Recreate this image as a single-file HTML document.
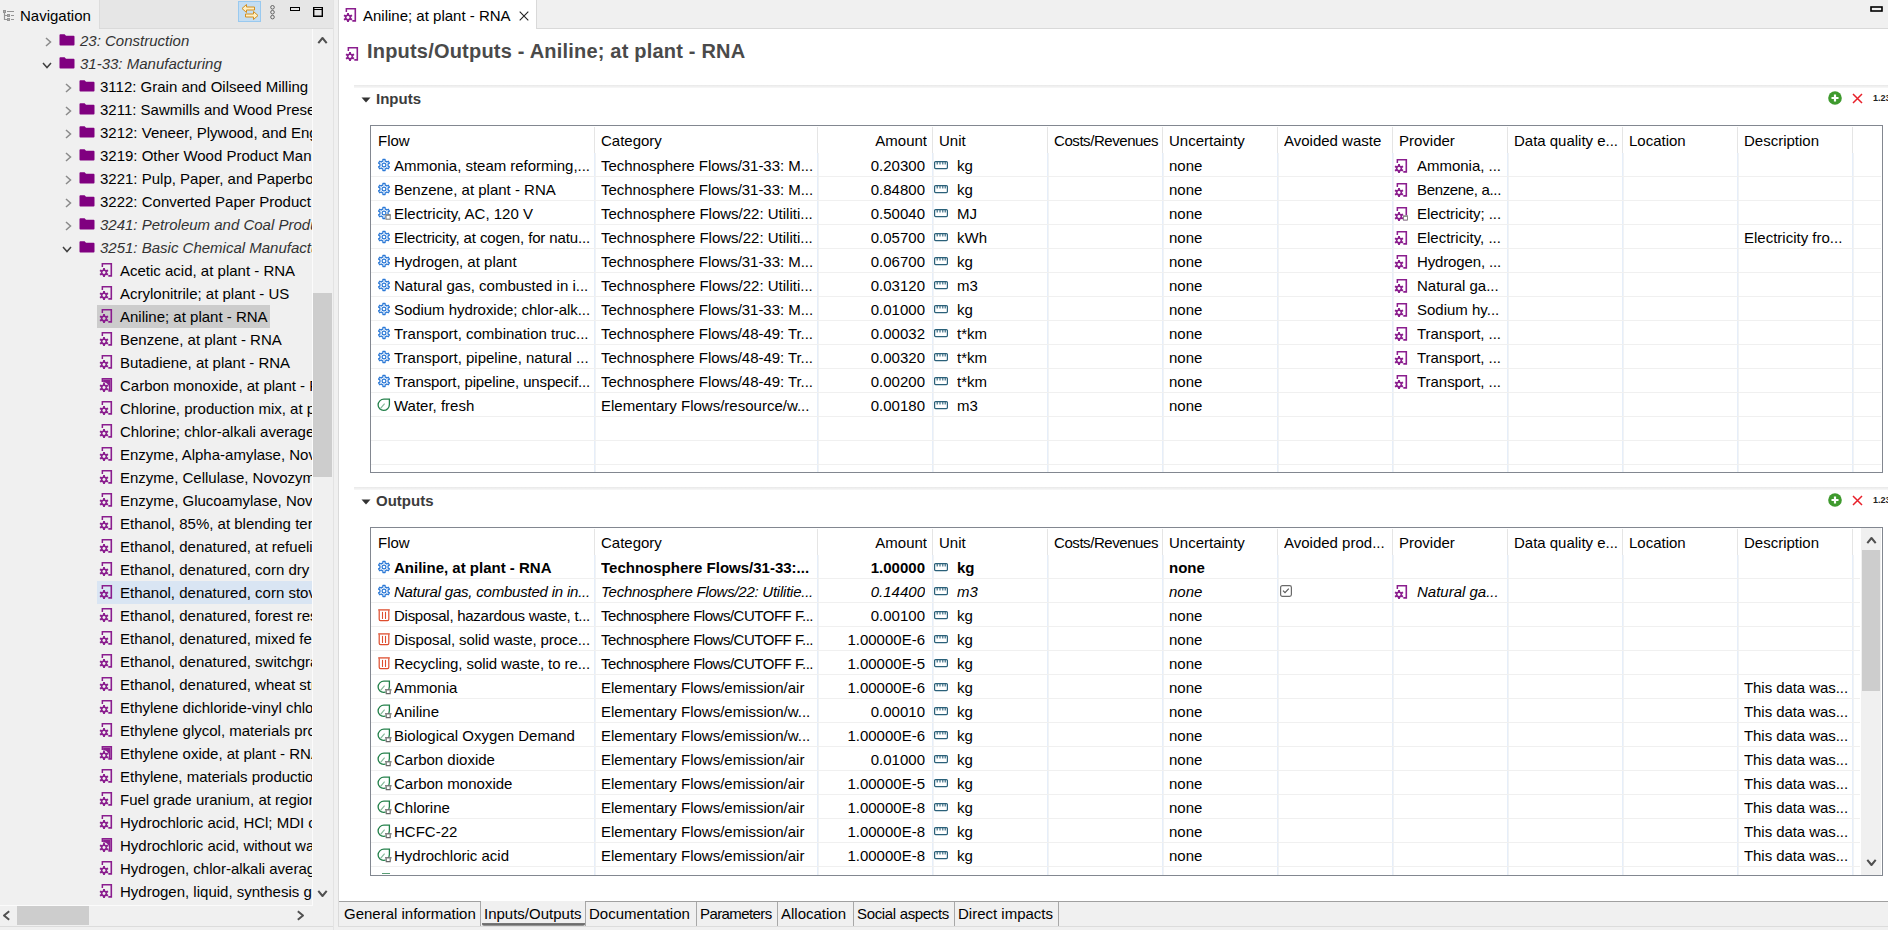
<!DOCTYPE html><html><head><meta charset="utf-8"><title>openLCA</title><style>
*{box-sizing:border-box}
html,body{margin:0;padding:0}
body{width:1888px;height:930px;overflow:hidden;background:#f0f0f0;font-family:"Liberation Sans",sans-serif;font-size:15px;color:#000;position:relative}
div{position:absolute}
.ic{position:absolute;overflow:visible}
.ttxt{height:23px;line-height:23px;white-space:nowrap}
.clipL{left:0;top:29px;width:312px;height:876px;overflow:hidden}
.sel{height:23px;background:#cccccc}
.hov{height:23px;background:#d9e5f3}
.tbl{border:1px solid #828790;background:#fff}
.hdiv{width:1px;background:#e5e5e5}
.vdiv{width:2px;background:linear-gradient(90deg,#e6eef9 50%,#f1f3f5 50%)}
.hgrid{height:1px;background:#f0f0f0}
.hcell{height:27px;line-height:27px;white-space:nowrap;overflow:hidden}
.cell{height:23px;line-height:23px;white-space:nowrap;overflow:hidden}
.chk{width:12px;height:12px;border:1px solid #999;background:#fff}
.sep{height:3px;background:linear-gradient(#e8e8e8,#f8f8f8)}
.sect{font-weight:bold;color:#3c3c3c;line-height:17px;white-space:nowrap}
.btab{top:902px;height:24px;line-height:23px;white-space:nowrap;border-right:1px solid #a8a8a8}
</style></head><body>
<div style="left:0;top:0;width:333px;height:28px;background:#e6e6e6"></div>
<div style="left:0;top:0;width:99px;height:28px;background:#f0f0f0"></div>
<div style="left:99px;top:28px;width:234px;height:1px;background:#dadada"></div>
<div style="left:99px;top:0;width:1px;height:28px;background:#dcdcdc"></div>
<svg class="ic" style="left:0px;top:5px;width:16px;height:18px" viewBox="0 0 16 18"><g fill="none" stroke="#959595" stroke-width="1.2"><rect x="3.6" y="5.6" width="1.8" height="1.8"/><rect x="7.6" y="9.6" width="1.8" height="1.8"/><rect x="7.6" y="13.6" width="1.8" height="1.8"/><path d="M4.5 7.5 V14.5 H7 M4.5 10.5 H7 M7 6.5 H14 M11 10.5 H14 M11 14.5 H14"/></g></svg>
<div class="ttxt" style="left:20px;top:3.5px">Navigation</div>
<div style="left:238px;top:1px;width:23px;height:21px;background:#c4ddf2;border:1px solid #99c9ef"></div>
<svg class="ic" style="left:240px;top:2px;width:20px;height:20px" viewBox="0 0 20 20"><path d="M2 6.5 L6.5 2.5 V5 H14.5 V8 H6.5 V10.5 Z" fill="#ffefc2" stroke="#d28f22" stroke-width="1" stroke-linejoin="round"/><path d="M18 13.5 L13.5 9.5 V12 H5.5 V15 H13.5 V17.5 Z" fill="#ffefc2" stroke="#d28f22" stroke-width="1" stroke-linejoin="round"/></svg>
<svg class="ic" style="left:269px;top:5px;width:7px;height:15px" viewBox="0 0 7 15"><circle cx="3.5" cy="2.3" r="1.8" fill="none" stroke="#555" stroke-width="0.9"/><circle cx="3.5" cy="7.2" r="1.8" fill="none" stroke="#555" stroke-width="0.9"/><circle cx="3.5" cy="12.1" r="1.8" fill="none" stroke="#555" stroke-width="0.9"/></svg>
<div style="left:290px;top:7px;width:10px;height:4px;border:1.5px solid #000"></div>
<svg class="ic" style="left:313px;top:7px;width:10px;height:10px" viewBox="0 0 10 10"><path d="M0 0 H10 V10 H0 Z M1.4 3 V8.6 H8.6 V3 Z" fill="#000" fill-rule="evenodd"/><rect x="1.4" y="1" width="7.2" height="1" fill="#fff" opacity="0.85"/></svg>
<div class="clipL">
<div style="left:0;top:-29px;width:312px;height:905px"><svg class="ic" style="left:45px;top:37px;width:7px;height:10px" viewBox="0 0 7 10"><path d="M1 1 L5.5 5 L1 9" fill="none" stroke="#8a8a8a" stroke-width="1.5"/></svg>
<svg class="ic" style="left:59px;top:34px;width:16px;height:12px" viewBox="0 0 16 12"><path d="M0.5 1.2 Q0.5 0.3 1.4 0.3 H5.6 L7 1.8 H14.6 Q15.5 1.8 15.5 2.7 V10.6 Q15.5 11.5 14.6 11.5 H1.4 Q0.5 11.5 0.5 10.6 Z" fill="#800080"/></svg>
<div class="ttxt" style="top:29px;left:80px;font-style:italic;color:#333">23: Construction</div>
<svg class="ic" style="left:42px;top:62px;width:10px;height:7px" viewBox="0 0 10 7"><path d="M1 1 L5 5.5 L9 1" fill="none" stroke="#404040" stroke-width="1.5"/></svg>
<svg class="ic" style="left:59px;top:57px;width:16px;height:12px" viewBox="0 0 16 12"><path d="M0.5 1.2 Q0.5 0.3 1.4 0.3 H5.6 L7 1.8 H14.6 Q15.5 1.8 15.5 2.7 V10.6 Q15.5 11.5 14.6 11.5 H1.4 Q0.5 11.5 0.5 10.6 Z" fill="#800080"/></svg>
<div class="ttxt" style="top:52px;left:80px;font-style:italic;color:#333">31-33: Manufacturing</div>
<svg class="ic" style="left:65px;top:83px;width:7px;height:10px" viewBox="0 0 7 10"><path d="M1 1 L5.5 5 L1 9" fill="none" stroke="#8a8a8a" stroke-width="1.5"/></svg>
<svg class="ic" style="left:79px;top:80px;width:16px;height:12px" viewBox="0 0 16 12"><path d="M0.5 1.2 Q0.5 0.3 1.4 0.3 H5.6 L7 1.8 H14.6 Q15.5 1.8 15.5 2.7 V10.6 Q15.5 11.5 14.6 11.5 H1.4 Q0.5 11.5 0.5 10.6 Z" fill="#800080"/></svg>
<div class="ttxt" style="top:75px;left:100px;">3112: Grain and Oilseed Milling</div>
<svg class="ic" style="left:65px;top:106px;width:7px;height:10px" viewBox="0 0 7 10"><path d="M1 1 L5.5 5 L1 9" fill="none" stroke="#8a8a8a" stroke-width="1.5"/></svg>
<svg class="ic" style="left:79px;top:103px;width:16px;height:12px" viewBox="0 0 16 12"><path d="M0.5 1.2 Q0.5 0.3 1.4 0.3 H5.6 L7 1.8 H14.6 Q15.5 1.8 15.5 2.7 V10.6 Q15.5 11.5 14.6 11.5 H1.4 Q0.5 11.5 0.5 10.6 Z" fill="#800080"/></svg>
<div class="ttxt" style="top:98px;left:100px;">3211: Sawmills and Wood Preservation</div>
<svg class="ic" style="left:65px;top:129px;width:7px;height:10px" viewBox="0 0 7 10"><path d="M1 1 L5.5 5 L1 9" fill="none" stroke="#8a8a8a" stroke-width="1.5"/></svg>
<svg class="ic" style="left:79px;top:126px;width:16px;height:12px" viewBox="0 0 16 12"><path d="M0.5 1.2 Q0.5 0.3 1.4 0.3 H5.6 L7 1.8 H14.6 Q15.5 1.8 15.5 2.7 V10.6 Q15.5 11.5 14.6 11.5 H1.4 Q0.5 11.5 0.5 10.6 Z" fill="#800080"/></svg>
<div class="ttxt" style="top:121px;left:100px;">3212: Veneer, Plywood, and Engineered</div>
<svg class="ic" style="left:65px;top:152px;width:7px;height:10px" viewBox="0 0 7 10"><path d="M1 1 L5.5 5 L1 9" fill="none" stroke="#8a8a8a" stroke-width="1.5"/></svg>
<svg class="ic" style="left:79px;top:149px;width:16px;height:12px" viewBox="0 0 16 12"><path d="M0.5 1.2 Q0.5 0.3 1.4 0.3 H5.6 L7 1.8 H14.6 Q15.5 1.8 15.5 2.7 V10.6 Q15.5 11.5 14.6 11.5 H1.4 Q0.5 11.5 0.5 10.6 Z" fill="#800080"/></svg>
<div class="ttxt" style="top:144px;left:100px;">3219: Other Wood Product Manufacturing</div>
<svg class="ic" style="left:65px;top:175px;width:7px;height:10px" viewBox="0 0 7 10"><path d="M1 1 L5.5 5 L1 9" fill="none" stroke="#8a8a8a" stroke-width="1.5"/></svg>
<svg class="ic" style="left:79px;top:172px;width:16px;height:12px" viewBox="0 0 16 12"><path d="M0.5 1.2 Q0.5 0.3 1.4 0.3 H5.6 L7 1.8 H14.6 Q15.5 1.8 15.5 2.7 V10.6 Q15.5 11.5 14.6 11.5 H1.4 Q0.5 11.5 0.5 10.6 Z" fill="#800080"/></svg>
<div class="ttxt" style="top:167px;left:100px;">3221: Pulp, Paper, and Paperboard Mills</div>
<svg class="ic" style="left:65px;top:198px;width:7px;height:10px" viewBox="0 0 7 10"><path d="M1 1 L5.5 5 L1 9" fill="none" stroke="#8a8a8a" stroke-width="1.5"/></svg>
<svg class="ic" style="left:79px;top:195px;width:16px;height:12px" viewBox="0 0 16 12"><path d="M0.5 1.2 Q0.5 0.3 1.4 0.3 H5.6 L7 1.8 H14.6 Q15.5 1.8 15.5 2.7 V10.6 Q15.5 11.5 14.6 11.5 H1.4 Q0.5 11.5 0.5 10.6 Z" fill="#800080"/></svg>
<div class="ttxt" style="top:190px;left:100px;">3222: Converted Paper Product Manufacturing</div>
<svg class="ic" style="left:65px;top:221px;width:7px;height:10px" viewBox="0 0 7 10"><path d="M1 1 L5.5 5 L1 9" fill="none" stroke="#8a8a8a" stroke-width="1.5"/></svg>
<svg class="ic" style="left:79px;top:218px;width:16px;height:12px" viewBox="0 0 16 12"><path d="M0.5 1.2 Q0.5 0.3 1.4 0.3 H5.6 L7 1.8 H14.6 Q15.5 1.8 15.5 2.7 V10.6 Q15.5 11.5 14.6 11.5 H1.4 Q0.5 11.5 0.5 10.6 Z" fill="#800080"/></svg>
<div class="ttxt" style="top:213px;left:100px;font-style:italic;color:#333">3241: Petroleum and Coal Products</div>
<svg class="ic" style="left:62px;top:246px;width:10px;height:7px" viewBox="0 0 10 7"><path d="M1 1 L5 5.5 L9 1" fill="none" stroke="#404040" stroke-width="1.5"/></svg>
<svg class="ic" style="left:79px;top:241px;width:16px;height:12px" viewBox="0 0 16 12"><path d="M0.5 1.2 Q0.5 0.3 1.4 0.3 H5.6 L7 1.8 H14.6 Q15.5 1.8 15.5 2.7 V10.6 Q15.5 11.5 14.6 11.5 H1.4 Q0.5 11.5 0.5 10.6 Z" fill="#800080"/></svg>
<div class="ttxt" style="top:236px;left:100px;font-style:italic;color:#333">3251: Basic Chemical Manufacturing</div>
<svg class="ic" style="left:99px;top:262px;width:14px;height:15px" viewBox="0 0 14 15"><path d="M2.6 1 H13.1 V14.7 H9.3 V13 H11.5 V2.6 H4.1 V5 H2.6 Z" fill="#8a1d8e"/><circle cx="5" cy="10.5" r="4.9" fill="#f0f0f0"/><path d="M3.8 8.0 L4.1 5.9 H5.9 L6.2 8.0 Z" fill="#8a1d8e" transform="rotate(0 5 10.5)"/><path d="M3.8 8.0 L4.1 5.9 H5.9 L6.2 8.0 Z" fill="#8a1d8e" transform="rotate(60 5 10.5)"/><path d="M3.8 8.0 L4.1 5.9 H5.9 L6.2 8.0 Z" fill="#8a1d8e" transform="rotate(120 5 10.5)"/><path d="M3.8 8.0 L4.1 5.9 H5.9 L6.2 8.0 Z" fill="#8a1d8e" transform="rotate(180 5 10.5)"/><path d="M3.8 8.0 L4.1 5.9 H5.9 L6.2 8.0 Z" fill="#8a1d8e" transform="rotate(240 5 10.5)"/><path d="M3.8 8.0 L4.1 5.9 H5.9 L6.2 8.0 Z" fill="#8a1d8e" transform="rotate(300 5 10.5)"/><circle cx="5" cy="10.5" r="3.1" fill="#8a1d8e"/><circle cx="5" cy="10.5" r="1.45" fill="#f0f0f0"/></svg>
<div class="ttxt" style="top:259px;left:120px;">Acetic acid, at plant - RNA</div>
<svg class="ic" style="left:99px;top:285px;width:14px;height:15px" viewBox="0 0 14 15"><path d="M2.6 1 H13.1 V14.7 H9.3 V13 H11.5 V2.6 H4.1 V5 H2.6 Z" fill="#8a1d8e"/><circle cx="5" cy="10.5" r="4.9" fill="#f0f0f0"/><path d="M3.8 8.0 L4.1 5.9 H5.9 L6.2 8.0 Z" fill="#8a1d8e" transform="rotate(0 5 10.5)"/><path d="M3.8 8.0 L4.1 5.9 H5.9 L6.2 8.0 Z" fill="#8a1d8e" transform="rotate(60 5 10.5)"/><path d="M3.8 8.0 L4.1 5.9 H5.9 L6.2 8.0 Z" fill="#8a1d8e" transform="rotate(120 5 10.5)"/><path d="M3.8 8.0 L4.1 5.9 H5.9 L6.2 8.0 Z" fill="#8a1d8e" transform="rotate(180 5 10.5)"/><path d="M3.8 8.0 L4.1 5.9 H5.9 L6.2 8.0 Z" fill="#8a1d8e" transform="rotate(240 5 10.5)"/><path d="M3.8 8.0 L4.1 5.9 H5.9 L6.2 8.0 Z" fill="#8a1d8e" transform="rotate(300 5 10.5)"/><circle cx="5" cy="10.5" r="3.1" fill="#8a1d8e"/><circle cx="5" cy="10.5" r="1.45" fill="#f0f0f0"/></svg>
<div class="ttxt" style="top:282px;left:120px;">Acrylonitrile; at plant - US</div>
<div class="sel" style="top:305px;left:97px;width:173px"></div>
<svg class="ic" style="left:99px;top:308px;width:14px;height:15px" viewBox="0 0 14 15"><path d="M2.6 1 H13.1 V14.7 H9.3 V13 H11.5 V2.6 H4.1 V5 H2.6 Z" fill="#8a1d8e"/><circle cx="5" cy="10.5" r="4.9" fill="#cccccc"/><path d="M3.8 8.0 L4.1 5.9 H5.9 L6.2 8.0 Z" fill="#8a1d8e" transform="rotate(0 5 10.5)"/><path d="M3.8 8.0 L4.1 5.9 H5.9 L6.2 8.0 Z" fill="#8a1d8e" transform="rotate(60 5 10.5)"/><path d="M3.8 8.0 L4.1 5.9 H5.9 L6.2 8.0 Z" fill="#8a1d8e" transform="rotate(120 5 10.5)"/><path d="M3.8 8.0 L4.1 5.9 H5.9 L6.2 8.0 Z" fill="#8a1d8e" transform="rotate(180 5 10.5)"/><path d="M3.8 8.0 L4.1 5.9 H5.9 L6.2 8.0 Z" fill="#8a1d8e" transform="rotate(240 5 10.5)"/><path d="M3.8 8.0 L4.1 5.9 H5.9 L6.2 8.0 Z" fill="#8a1d8e" transform="rotate(300 5 10.5)"/><circle cx="5" cy="10.5" r="3.1" fill="#8a1d8e"/><circle cx="5" cy="10.5" r="1.45" fill="#cccccc"/></svg>
<div class="ttxt" style="top:305px;left:120px;">Aniline; at plant - RNA</div>
<svg class="ic" style="left:99px;top:331px;width:14px;height:15px" viewBox="0 0 14 15"><path d="M2.6 1 H13.1 V14.7 H9.3 V13 H11.5 V2.6 H4.1 V5 H2.6 Z" fill="#8a1d8e"/><circle cx="5" cy="10.5" r="4.9" fill="#f0f0f0"/><path d="M3.8 8.0 L4.1 5.9 H5.9 L6.2 8.0 Z" fill="#8a1d8e" transform="rotate(0 5 10.5)"/><path d="M3.8 8.0 L4.1 5.9 H5.9 L6.2 8.0 Z" fill="#8a1d8e" transform="rotate(60 5 10.5)"/><path d="M3.8 8.0 L4.1 5.9 H5.9 L6.2 8.0 Z" fill="#8a1d8e" transform="rotate(120 5 10.5)"/><path d="M3.8 8.0 L4.1 5.9 H5.9 L6.2 8.0 Z" fill="#8a1d8e" transform="rotate(180 5 10.5)"/><path d="M3.8 8.0 L4.1 5.9 H5.9 L6.2 8.0 Z" fill="#8a1d8e" transform="rotate(240 5 10.5)"/><path d="M3.8 8.0 L4.1 5.9 H5.9 L6.2 8.0 Z" fill="#8a1d8e" transform="rotate(300 5 10.5)"/><circle cx="5" cy="10.5" r="3.1" fill="#8a1d8e"/><circle cx="5" cy="10.5" r="1.45" fill="#f0f0f0"/></svg>
<div class="ttxt" style="top:328px;left:120px;">Benzene, at plant - RNA</div>
<svg class="ic" style="left:99px;top:354px;width:14px;height:15px" viewBox="0 0 14 15"><path d="M2.6 1 H13.1 V14.7 H9.3 V13 H11.5 V2.6 H4.1 V5 H2.6 Z" fill="#8a1d8e"/><circle cx="5" cy="10.5" r="4.9" fill="#f0f0f0"/><path d="M3.8 8.0 L4.1 5.9 H5.9 L6.2 8.0 Z" fill="#8a1d8e" transform="rotate(0 5 10.5)"/><path d="M3.8 8.0 L4.1 5.9 H5.9 L6.2 8.0 Z" fill="#8a1d8e" transform="rotate(60 5 10.5)"/><path d="M3.8 8.0 L4.1 5.9 H5.9 L6.2 8.0 Z" fill="#8a1d8e" transform="rotate(120 5 10.5)"/><path d="M3.8 8.0 L4.1 5.9 H5.9 L6.2 8.0 Z" fill="#8a1d8e" transform="rotate(180 5 10.5)"/><path d="M3.8 8.0 L4.1 5.9 H5.9 L6.2 8.0 Z" fill="#8a1d8e" transform="rotate(240 5 10.5)"/><path d="M3.8 8.0 L4.1 5.9 H5.9 L6.2 8.0 Z" fill="#8a1d8e" transform="rotate(300 5 10.5)"/><circle cx="5" cy="10.5" r="3.1" fill="#8a1d8e"/><circle cx="5" cy="10.5" r="1.45" fill="#f0f0f0"/></svg>
<div class="ttxt" style="top:351px;left:120px;">Butadiene, at plant - RNA</div>
<svg class="ic" style="left:99px;top:377px;width:14px;height:15px" viewBox="0 0 14 15"><path d="M2.6 1 H13.1 V14.7 H9.3 V13 H11.5 V2.6 H4.1 V5 H2.6 Z" fill="#8a1d8e"/><path d="M4.1 2.6 H11.5 V13 H9 L4.1 6.5 Z" fill="#8a1d8e"/><circle cx="5" cy="10.5" r="4.9" fill="#f0f0f0"/><path d="M3.8 8.0 L4.1 5.9 H5.9 L6.2 8.0 Z" fill="#8a1d8e" transform="rotate(0 5 10.5)"/><path d="M3.8 8.0 L4.1 5.9 H5.9 L6.2 8.0 Z" fill="#8a1d8e" transform="rotate(60 5 10.5)"/><path d="M3.8 8.0 L4.1 5.9 H5.9 L6.2 8.0 Z" fill="#8a1d8e" transform="rotate(120 5 10.5)"/><path d="M3.8 8.0 L4.1 5.9 H5.9 L6.2 8.0 Z" fill="#8a1d8e" transform="rotate(180 5 10.5)"/><path d="M3.8 8.0 L4.1 5.9 H5.9 L6.2 8.0 Z" fill="#8a1d8e" transform="rotate(240 5 10.5)"/><path d="M3.8 8.0 L4.1 5.9 H5.9 L6.2 8.0 Z" fill="#8a1d8e" transform="rotate(300 5 10.5)"/><circle cx="5" cy="10.5" r="3.1" fill="#8a1d8e"/><circle cx="5" cy="10.5" r="1.45" fill="#f0f0f0"/></svg>
<div class="ttxt" style="top:374px;left:120px;">Carbon monoxide, at plant - RNA</div>
<svg class="ic" style="left:99px;top:400px;width:14px;height:15px" viewBox="0 0 14 15"><path d="M2.6 1 H13.1 V14.7 H9.3 V13 H11.5 V2.6 H4.1 V5 H2.6 Z" fill="#8a1d8e"/><circle cx="5" cy="10.5" r="4.9" fill="#f0f0f0"/><path d="M3.8 8.0 L4.1 5.9 H5.9 L6.2 8.0 Z" fill="#8a1d8e" transform="rotate(0 5 10.5)"/><path d="M3.8 8.0 L4.1 5.9 H5.9 L6.2 8.0 Z" fill="#8a1d8e" transform="rotate(60 5 10.5)"/><path d="M3.8 8.0 L4.1 5.9 H5.9 L6.2 8.0 Z" fill="#8a1d8e" transform="rotate(120 5 10.5)"/><path d="M3.8 8.0 L4.1 5.9 H5.9 L6.2 8.0 Z" fill="#8a1d8e" transform="rotate(180 5 10.5)"/><path d="M3.8 8.0 L4.1 5.9 H5.9 L6.2 8.0 Z" fill="#8a1d8e" transform="rotate(240 5 10.5)"/><path d="M3.8 8.0 L4.1 5.9 H5.9 L6.2 8.0 Z" fill="#8a1d8e" transform="rotate(300 5 10.5)"/><circle cx="5" cy="10.5" r="3.1" fill="#8a1d8e"/><circle cx="5" cy="10.5" r="1.45" fill="#f0f0f0"/></svg>
<div class="ttxt" style="top:397px;left:120px;">Chlorine, production mix, at plant</div>
<svg class="ic" style="left:99px;top:423px;width:14px;height:15px" viewBox="0 0 14 15"><path d="M2.6 1 H13.1 V14.7 H9.3 V13 H11.5 V2.6 H4.1 V5 H2.6 Z" fill="#8a1d8e"/><circle cx="5" cy="10.5" r="4.9" fill="#f0f0f0"/><path d="M3.8 8.0 L4.1 5.9 H5.9 L6.2 8.0 Z" fill="#8a1d8e" transform="rotate(0 5 10.5)"/><path d="M3.8 8.0 L4.1 5.9 H5.9 L6.2 8.0 Z" fill="#8a1d8e" transform="rotate(60 5 10.5)"/><path d="M3.8 8.0 L4.1 5.9 H5.9 L6.2 8.0 Z" fill="#8a1d8e" transform="rotate(120 5 10.5)"/><path d="M3.8 8.0 L4.1 5.9 H5.9 L6.2 8.0 Z" fill="#8a1d8e" transform="rotate(180 5 10.5)"/><path d="M3.8 8.0 L4.1 5.9 H5.9 L6.2 8.0 Z" fill="#8a1d8e" transform="rotate(240 5 10.5)"/><path d="M3.8 8.0 L4.1 5.9 H5.9 L6.2 8.0 Z" fill="#8a1d8e" transform="rotate(300 5 10.5)"/><circle cx="5" cy="10.5" r="3.1" fill="#8a1d8e"/><circle cx="5" cy="10.5" r="1.45" fill="#f0f0f0"/></svg>
<div class="ttxt" style="top:420px;left:120px;">Chlorine; chlor-alkali average</div>
<svg class="ic" style="left:99px;top:446px;width:14px;height:15px" viewBox="0 0 14 15"><path d="M2.6 1 H13.1 V14.7 H9.3 V13 H11.5 V2.6 H4.1 V5 H2.6 Z" fill="#8a1d8e"/><circle cx="5" cy="10.5" r="4.9" fill="#f0f0f0"/><path d="M3.8 8.0 L4.1 5.9 H5.9 L6.2 8.0 Z" fill="#8a1d8e" transform="rotate(0 5 10.5)"/><path d="M3.8 8.0 L4.1 5.9 H5.9 L6.2 8.0 Z" fill="#8a1d8e" transform="rotate(60 5 10.5)"/><path d="M3.8 8.0 L4.1 5.9 H5.9 L6.2 8.0 Z" fill="#8a1d8e" transform="rotate(120 5 10.5)"/><path d="M3.8 8.0 L4.1 5.9 H5.9 L6.2 8.0 Z" fill="#8a1d8e" transform="rotate(180 5 10.5)"/><path d="M3.8 8.0 L4.1 5.9 H5.9 L6.2 8.0 Z" fill="#8a1d8e" transform="rotate(240 5 10.5)"/><path d="M3.8 8.0 L4.1 5.9 H5.9 L6.2 8.0 Z" fill="#8a1d8e" transform="rotate(300 5 10.5)"/><circle cx="5" cy="10.5" r="3.1" fill="#8a1d8e"/><circle cx="5" cy="10.5" r="1.45" fill="#f0f0f0"/></svg>
<div class="ttxt" style="top:443px;left:120px;">Enzyme, Alpha-amylase, Novozymes</div>
<svg class="ic" style="left:99px;top:469px;width:14px;height:15px" viewBox="0 0 14 15"><path d="M2.6 1 H13.1 V14.7 H9.3 V13 H11.5 V2.6 H4.1 V5 H2.6 Z" fill="#8a1d8e"/><circle cx="5" cy="10.5" r="4.9" fill="#f0f0f0"/><path d="M3.8 8.0 L4.1 5.9 H5.9 L6.2 8.0 Z" fill="#8a1d8e" transform="rotate(0 5 10.5)"/><path d="M3.8 8.0 L4.1 5.9 H5.9 L6.2 8.0 Z" fill="#8a1d8e" transform="rotate(60 5 10.5)"/><path d="M3.8 8.0 L4.1 5.9 H5.9 L6.2 8.0 Z" fill="#8a1d8e" transform="rotate(120 5 10.5)"/><path d="M3.8 8.0 L4.1 5.9 H5.9 L6.2 8.0 Z" fill="#8a1d8e" transform="rotate(180 5 10.5)"/><path d="M3.8 8.0 L4.1 5.9 H5.9 L6.2 8.0 Z" fill="#8a1d8e" transform="rotate(240 5 10.5)"/><path d="M3.8 8.0 L4.1 5.9 H5.9 L6.2 8.0 Z" fill="#8a1d8e" transform="rotate(300 5 10.5)"/><circle cx="5" cy="10.5" r="3.1" fill="#8a1d8e"/><circle cx="5" cy="10.5" r="1.45" fill="#f0f0f0"/></svg>
<div class="ttxt" style="top:466px;left:120px;">Enzyme, Cellulase, Novozymes</div>
<svg class="ic" style="left:99px;top:492px;width:14px;height:15px" viewBox="0 0 14 15"><path d="M2.6 1 H13.1 V14.7 H9.3 V13 H11.5 V2.6 H4.1 V5 H2.6 Z" fill="#8a1d8e"/><circle cx="5" cy="10.5" r="4.9" fill="#f0f0f0"/><path d="M3.8 8.0 L4.1 5.9 H5.9 L6.2 8.0 Z" fill="#8a1d8e" transform="rotate(0 5 10.5)"/><path d="M3.8 8.0 L4.1 5.9 H5.9 L6.2 8.0 Z" fill="#8a1d8e" transform="rotate(60 5 10.5)"/><path d="M3.8 8.0 L4.1 5.9 H5.9 L6.2 8.0 Z" fill="#8a1d8e" transform="rotate(120 5 10.5)"/><path d="M3.8 8.0 L4.1 5.9 H5.9 L6.2 8.0 Z" fill="#8a1d8e" transform="rotate(180 5 10.5)"/><path d="M3.8 8.0 L4.1 5.9 H5.9 L6.2 8.0 Z" fill="#8a1d8e" transform="rotate(240 5 10.5)"/><path d="M3.8 8.0 L4.1 5.9 H5.9 L6.2 8.0 Z" fill="#8a1d8e" transform="rotate(300 5 10.5)"/><circle cx="5" cy="10.5" r="3.1" fill="#8a1d8e"/><circle cx="5" cy="10.5" r="1.45" fill="#f0f0f0"/></svg>
<div class="ttxt" style="top:489px;left:120px;">Enzyme, Glucoamylase, Novozymes</div>
<svg class="ic" style="left:99px;top:515px;width:14px;height:15px" viewBox="0 0 14 15"><path d="M2.6 1 H13.1 V14.7 H9.3 V13 H11.5 V2.6 H4.1 V5 H2.6 Z" fill="#8a1d8e"/><circle cx="5" cy="10.5" r="4.9" fill="#f0f0f0"/><path d="M3.8 8.0 L4.1 5.9 H5.9 L6.2 8.0 Z" fill="#8a1d8e" transform="rotate(0 5 10.5)"/><path d="M3.8 8.0 L4.1 5.9 H5.9 L6.2 8.0 Z" fill="#8a1d8e" transform="rotate(60 5 10.5)"/><path d="M3.8 8.0 L4.1 5.9 H5.9 L6.2 8.0 Z" fill="#8a1d8e" transform="rotate(120 5 10.5)"/><path d="M3.8 8.0 L4.1 5.9 H5.9 L6.2 8.0 Z" fill="#8a1d8e" transform="rotate(180 5 10.5)"/><path d="M3.8 8.0 L4.1 5.9 H5.9 L6.2 8.0 Z" fill="#8a1d8e" transform="rotate(240 5 10.5)"/><path d="M3.8 8.0 L4.1 5.9 H5.9 L6.2 8.0 Z" fill="#8a1d8e" transform="rotate(300 5 10.5)"/><circle cx="5" cy="10.5" r="3.1" fill="#8a1d8e"/><circle cx="5" cy="10.5" r="1.45" fill="#f0f0f0"/></svg>
<div class="ttxt" style="top:512px;left:120px;">Ethanol, 85%, at blending terminal</div>
<svg class="ic" style="left:99px;top:538px;width:14px;height:15px" viewBox="0 0 14 15"><path d="M2.6 1 H13.1 V14.7 H9.3 V13 H11.5 V2.6 H4.1 V5 H2.6 Z" fill="#8a1d8e"/><circle cx="5" cy="10.5" r="4.9" fill="#f0f0f0"/><path d="M3.8 8.0 L4.1 5.9 H5.9 L6.2 8.0 Z" fill="#8a1d8e" transform="rotate(0 5 10.5)"/><path d="M3.8 8.0 L4.1 5.9 H5.9 L6.2 8.0 Z" fill="#8a1d8e" transform="rotate(60 5 10.5)"/><path d="M3.8 8.0 L4.1 5.9 H5.9 L6.2 8.0 Z" fill="#8a1d8e" transform="rotate(120 5 10.5)"/><path d="M3.8 8.0 L4.1 5.9 H5.9 L6.2 8.0 Z" fill="#8a1d8e" transform="rotate(180 5 10.5)"/><path d="M3.8 8.0 L4.1 5.9 H5.9 L6.2 8.0 Z" fill="#8a1d8e" transform="rotate(240 5 10.5)"/><path d="M3.8 8.0 L4.1 5.9 H5.9 L6.2 8.0 Z" fill="#8a1d8e" transform="rotate(300 5 10.5)"/><circle cx="5" cy="10.5" r="3.1" fill="#8a1d8e"/><circle cx="5" cy="10.5" r="1.45" fill="#f0f0f0"/></svg>
<div class="ttxt" style="top:535px;left:120px;">Ethanol, denatured, at refueling</div>
<svg class="ic" style="left:99px;top:561px;width:14px;height:15px" viewBox="0 0 14 15"><path d="M2.6 1 H13.1 V14.7 H9.3 V13 H11.5 V2.6 H4.1 V5 H2.6 Z" fill="#8a1d8e"/><circle cx="5" cy="10.5" r="4.9" fill="#f0f0f0"/><path d="M3.8 8.0 L4.1 5.9 H5.9 L6.2 8.0 Z" fill="#8a1d8e" transform="rotate(0 5 10.5)"/><path d="M3.8 8.0 L4.1 5.9 H5.9 L6.2 8.0 Z" fill="#8a1d8e" transform="rotate(60 5 10.5)"/><path d="M3.8 8.0 L4.1 5.9 H5.9 L6.2 8.0 Z" fill="#8a1d8e" transform="rotate(120 5 10.5)"/><path d="M3.8 8.0 L4.1 5.9 H5.9 L6.2 8.0 Z" fill="#8a1d8e" transform="rotate(180 5 10.5)"/><path d="M3.8 8.0 L4.1 5.9 H5.9 L6.2 8.0 Z" fill="#8a1d8e" transform="rotate(240 5 10.5)"/><path d="M3.8 8.0 L4.1 5.9 H5.9 L6.2 8.0 Z" fill="#8a1d8e" transform="rotate(300 5 10.5)"/><circle cx="5" cy="10.5" r="3.1" fill="#8a1d8e"/><circle cx="5" cy="10.5" r="1.45" fill="#f0f0f0"/></svg>
<div class="ttxt" style="top:558px;left:120px;">Ethanol, denatured, corn dry mill</div>
<div class="hov" style="top:581px;left:97px;width:216px"></div>
<svg class="ic" style="left:99px;top:584px;width:14px;height:15px" viewBox="0 0 14 15"><path d="M2.6 1 H13.1 V14.7 H9.3 V13 H11.5 V2.6 H4.1 V5 H2.6 Z" fill="#8a1d8e"/><circle cx="5" cy="10.5" r="4.9" fill="#d9e5f3"/><path d="M3.8 8.0 L4.1 5.9 H5.9 L6.2 8.0 Z" fill="#8a1d8e" transform="rotate(0 5 10.5)"/><path d="M3.8 8.0 L4.1 5.9 H5.9 L6.2 8.0 Z" fill="#8a1d8e" transform="rotate(60 5 10.5)"/><path d="M3.8 8.0 L4.1 5.9 H5.9 L6.2 8.0 Z" fill="#8a1d8e" transform="rotate(120 5 10.5)"/><path d="M3.8 8.0 L4.1 5.9 H5.9 L6.2 8.0 Z" fill="#8a1d8e" transform="rotate(180 5 10.5)"/><path d="M3.8 8.0 L4.1 5.9 H5.9 L6.2 8.0 Z" fill="#8a1d8e" transform="rotate(240 5 10.5)"/><path d="M3.8 8.0 L4.1 5.9 H5.9 L6.2 8.0 Z" fill="#8a1d8e" transform="rotate(300 5 10.5)"/><circle cx="5" cy="10.5" r="3.1" fill="#8a1d8e"/><circle cx="5" cy="10.5" r="1.45" fill="#d9e5f3"/></svg>
<div class="ttxt" style="top:581px;left:120px;">Ethanol, denatured, corn stover</div>
<svg class="ic" style="left:99px;top:607px;width:14px;height:15px" viewBox="0 0 14 15"><path d="M2.6 1 H13.1 V14.7 H9.3 V13 H11.5 V2.6 H4.1 V5 H2.6 Z" fill="#8a1d8e"/><circle cx="5" cy="10.5" r="4.9" fill="#f0f0f0"/><path d="M3.8 8.0 L4.1 5.9 H5.9 L6.2 8.0 Z" fill="#8a1d8e" transform="rotate(0 5 10.5)"/><path d="M3.8 8.0 L4.1 5.9 H5.9 L6.2 8.0 Z" fill="#8a1d8e" transform="rotate(60 5 10.5)"/><path d="M3.8 8.0 L4.1 5.9 H5.9 L6.2 8.0 Z" fill="#8a1d8e" transform="rotate(120 5 10.5)"/><path d="M3.8 8.0 L4.1 5.9 H5.9 L6.2 8.0 Z" fill="#8a1d8e" transform="rotate(180 5 10.5)"/><path d="M3.8 8.0 L4.1 5.9 H5.9 L6.2 8.0 Z" fill="#8a1d8e" transform="rotate(240 5 10.5)"/><path d="M3.8 8.0 L4.1 5.9 H5.9 L6.2 8.0 Z" fill="#8a1d8e" transform="rotate(300 5 10.5)"/><circle cx="5" cy="10.5" r="3.1" fill="#8a1d8e"/><circle cx="5" cy="10.5" r="1.45" fill="#f0f0f0"/></svg>
<div class="ttxt" style="top:604px;left:120px;">Ethanol, denatured, forest residue</div>
<svg class="ic" style="left:99px;top:630px;width:14px;height:15px" viewBox="0 0 14 15"><path d="M2.6 1 H13.1 V14.7 H9.3 V13 H11.5 V2.6 H4.1 V5 H2.6 Z" fill="#8a1d8e"/><circle cx="5" cy="10.5" r="4.9" fill="#f0f0f0"/><path d="M3.8 8.0 L4.1 5.9 H5.9 L6.2 8.0 Z" fill="#8a1d8e" transform="rotate(0 5 10.5)"/><path d="M3.8 8.0 L4.1 5.9 H5.9 L6.2 8.0 Z" fill="#8a1d8e" transform="rotate(60 5 10.5)"/><path d="M3.8 8.0 L4.1 5.9 H5.9 L6.2 8.0 Z" fill="#8a1d8e" transform="rotate(120 5 10.5)"/><path d="M3.8 8.0 L4.1 5.9 H5.9 L6.2 8.0 Z" fill="#8a1d8e" transform="rotate(180 5 10.5)"/><path d="M3.8 8.0 L4.1 5.9 H5.9 L6.2 8.0 Z" fill="#8a1d8e" transform="rotate(240 5 10.5)"/><path d="M3.8 8.0 L4.1 5.9 H5.9 L6.2 8.0 Z" fill="#8a1d8e" transform="rotate(300 5 10.5)"/><circle cx="5" cy="10.5" r="3.1" fill="#8a1d8e"/><circle cx="5" cy="10.5" r="1.45" fill="#f0f0f0"/></svg>
<div class="ttxt" style="top:627px;left:120px;">Ethanol, denatured, mixed feedstock</div>
<svg class="ic" style="left:99px;top:653px;width:14px;height:15px" viewBox="0 0 14 15"><path d="M2.6 1 H13.1 V14.7 H9.3 V13 H11.5 V2.6 H4.1 V5 H2.6 Z" fill="#8a1d8e"/><circle cx="5" cy="10.5" r="4.9" fill="#f0f0f0"/><path d="M3.8 8.0 L4.1 5.9 H5.9 L6.2 8.0 Z" fill="#8a1d8e" transform="rotate(0 5 10.5)"/><path d="M3.8 8.0 L4.1 5.9 H5.9 L6.2 8.0 Z" fill="#8a1d8e" transform="rotate(60 5 10.5)"/><path d="M3.8 8.0 L4.1 5.9 H5.9 L6.2 8.0 Z" fill="#8a1d8e" transform="rotate(120 5 10.5)"/><path d="M3.8 8.0 L4.1 5.9 H5.9 L6.2 8.0 Z" fill="#8a1d8e" transform="rotate(180 5 10.5)"/><path d="M3.8 8.0 L4.1 5.9 H5.9 L6.2 8.0 Z" fill="#8a1d8e" transform="rotate(240 5 10.5)"/><path d="M3.8 8.0 L4.1 5.9 H5.9 L6.2 8.0 Z" fill="#8a1d8e" transform="rotate(300 5 10.5)"/><circle cx="5" cy="10.5" r="3.1" fill="#8a1d8e"/><circle cx="5" cy="10.5" r="1.45" fill="#f0f0f0"/></svg>
<div class="ttxt" style="top:650px;left:120px;">Ethanol, denatured, switchgrass</div>
<svg class="ic" style="left:99px;top:676px;width:14px;height:15px" viewBox="0 0 14 15"><path d="M2.6 1 H13.1 V14.7 H9.3 V13 H11.5 V2.6 H4.1 V5 H2.6 Z" fill="#8a1d8e"/><circle cx="5" cy="10.5" r="4.9" fill="#f0f0f0"/><path d="M3.8 8.0 L4.1 5.9 H5.9 L6.2 8.0 Z" fill="#8a1d8e" transform="rotate(0 5 10.5)"/><path d="M3.8 8.0 L4.1 5.9 H5.9 L6.2 8.0 Z" fill="#8a1d8e" transform="rotate(60 5 10.5)"/><path d="M3.8 8.0 L4.1 5.9 H5.9 L6.2 8.0 Z" fill="#8a1d8e" transform="rotate(120 5 10.5)"/><path d="M3.8 8.0 L4.1 5.9 H5.9 L6.2 8.0 Z" fill="#8a1d8e" transform="rotate(180 5 10.5)"/><path d="M3.8 8.0 L4.1 5.9 H5.9 L6.2 8.0 Z" fill="#8a1d8e" transform="rotate(240 5 10.5)"/><path d="M3.8 8.0 L4.1 5.9 H5.9 L6.2 8.0 Z" fill="#8a1d8e" transform="rotate(300 5 10.5)"/><circle cx="5" cy="10.5" r="3.1" fill="#8a1d8e"/><circle cx="5" cy="10.5" r="1.45" fill="#f0f0f0"/></svg>
<div class="ttxt" style="top:673px;left:120px;">Ethanol, denatured, wheat straw</div>
<svg class="ic" style="left:99px;top:699px;width:14px;height:15px" viewBox="0 0 14 15"><path d="M2.6 1 H13.1 V14.7 H9.3 V13 H11.5 V2.6 H4.1 V5 H2.6 Z" fill="#8a1d8e"/><circle cx="5" cy="10.5" r="4.9" fill="#f0f0f0"/><path d="M3.8 8.0 L4.1 5.9 H5.9 L6.2 8.0 Z" fill="#8a1d8e" transform="rotate(0 5 10.5)"/><path d="M3.8 8.0 L4.1 5.9 H5.9 L6.2 8.0 Z" fill="#8a1d8e" transform="rotate(60 5 10.5)"/><path d="M3.8 8.0 L4.1 5.9 H5.9 L6.2 8.0 Z" fill="#8a1d8e" transform="rotate(120 5 10.5)"/><path d="M3.8 8.0 L4.1 5.9 H5.9 L6.2 8.0 Z" fill="#8a1d8e" transform="rotate(180 5 10.5)"/><path d="M3.8 8.0 L4.1 5.9 H5.9 L6.2 8.0 Z" fill="#8a1d8e" transform="rotate(240 5 10.5)"/><path d="M3.8 8.0 L4.1 5.9 H5.9 L6.2 8.0 Z" fill="#8a1d8e" transform="rotate(300 5 10.5)"/><circle cx="5" cy="10.5" r="3.1" fill="#8a1d8e"/><circle cx="5" cy="10.5" r="1.45" fill="#f0f0f0"/></svg>
<div class="ttxt" style="top:696px;left:120px;">Ethylene dichloride-vinyl chloride</div>
<svg class="ic" style="left:99px;top:722px;width:14px;height:15px" viewBox="0 0 14 15"><path d="M2.6 1 H13.1 V14.7 H9.3 V13 H11.5 V2.6 H4.1 V5 H2.6 Z" fill="#8a1d8e"/><circle cx="5" cy="10.5" r="4.9" fill="#f0f0f0"/><path d="M3.8 8.0 L4.1 5.9 H5.9 L6.2 8.0 Z" fill="#8a1d8e" transform="rotate(0 5 10.5)"/><path d="M3.8 8.0 L4.1 5.9 H5.9 L6.2 8.0 Z" fill="#8a1d8e" transform="rotate(60 5 10.5)"/><path d="M3.8 8.0 L4.1 5.9 H5.9 L6.2 8.0 Z" fill="#8a1d8e" transform="rotate(120 5 10.5)"/><path d="M3.8 8.0 L4.1 5.9 H5.9 L6.2 8.0 Z" fill="#8a1d8e" transform="rotate(180 5 10.5)"/><path d="M3.8 8.0 L4.1 5.9 H5.9 L6.2 8.0 Z" fill="#8a1d8e" transform="rotate(240 5 10.5)"/><path d="M3.8 8.0 L4.1 5.9 H5.9 L6.2 8.0 Z" fill="#8a1d8e" transform="rotate(300 5 10.5)"/><circle cx="5" cy="10.5" r="3.1" fill="#8a1d8e"/><circle cx="5" cy="10.5" r="1.45" fill="#f0f0f0"/></svg>
<div class="ttxt" style="top:719px;left:120px;">Ethylene glycol, materials production</div>
<svg class="ic" style="left:99px;top:745px;width:14px;height:15px" viewBox="0 0 14 15"><path d="M2.6 1 H13.1 V14.7 H9.3 V13 H11.5 V2.6 H4.1 V5 H2.6 Z" fill="#8a1d8e"/><path d="M4.1 2.6 H11.5 V13 H9 L4.1 6.5 Z" fill="#8a1d8e"/><circle cx="5" cy="10.5" r="4.9" fill="#f0f0f0"/><path d="M3.8 8.0 L4.1 5.9 H5.9 L6.2 8.0 Z" fill="#8a1d8e" transform="rotate(0 5 10.5)"/><path d="M3.8 8.0 L4.1 5.9 H5.9 L6.2 8.0 Z" fill="#8a1d8e" transform="rotate(60 5 10.5)"/><path d="M3.8 8.0 L4.1 5.9 H5.9 L6.2 8.0 Z" fill="#8a1d8e" transform="rotate(120 5 10.5)"/><path d="M3.8 8.0 L4.1 5.9 H5.9 L6.2 8.0 Z" fill="#8a1d8e" transform="rotate(180 5 10.5)"/><path d="M3.8 8.0 L4.1 5.9 H5.9 L6.2 8.0 Z" fill="#8a1d8e" transform="rotate(240 5 10.5)"/><path d="M3.8 8.0 L4.1 5.9 H5.9 L6.2 8.0 Z" fill="#8a1d8e" transform="rotate(300 5 10.5)"/><circle cx="5" cy="10.5" r="3.1" fill="#8a1d8e"/><circle cx="5" cy="10.5" r="1.45" fill="#f0f0f0"/></svg>
<div class="ttxt" style="top:742px;left:120px;">Ethylene oxide, at plant - RNA</div>
<svg class="ic" style="left:99px;top:768px;width:14px;height:15px" viewBox="0 0 14 15"><path d="M2.6 1 H13.1 V14.7 H9.3 V13 H11.5 V2.6 H4.1 V5 H2.6 Z" fill="#8a1d8e"/><circle cx="5" cy="10.5" r="4.9" fill="#f0f0f0"/><path d="M3.8 8.0 L4.1 5.9 H5.9 L6.2 8.0 Z" fill="#8a1d8e" transform="rotate(0 5 10.5)"/><path d="M3.8 8.0 L4.1 5.9 H5.9 L6.2 8.0 Z" fill="#8a1d8e" transform="rotate(60 5 10.5)"/><path d="M3.8 8.0 L4.1 5.9 H5.9 L6.2 8.0 Z" fill="#8a1d8e" transform="rotate(120 5 10.5)"/><path d="M3.8 8.0 L4.1 5.9 H5.9 L6.2 8.0 Z" fill="#8a1d8e" transform="rotate(180 5 10.5)"/><path d="M3.8 8.0 L4.1 5.9 H5.9 L6.2 8.0 Z" fill="#8a1d8e" transform="rotate(240 5 10.5)"/><path d="M3.8 8.0 L4.1 5.9 H5.9 L6.2 8.0 Z" fill="#8a1d8e" transform="rotate(300 5 10.5)"/><circle cx="5" cy="10.5" r="3.1" fill="#8a1d8e"/><circle cx="5" cy="10.5" r="1.45" fill="#f0f0f0"/></svg>
<div class="ttxt" style="top:765px;left:120px;">Ethylene, materials production</div>
<svg class="ic" style="left:99px;top:791px;width:14px;height:15px" viewBox="0 0 14 15"><path d="M2.6 1 H13.1 V14.7 H9.3 V13 H11.5 V2.6 H4.1 V5 H2.6 Z" fill="#8a1d8e"/><circle cx="5" cy="10.5" r="4.9" fill="#f0f0f0"/><path d="M3.8 8.0 L4.1 5.9 H5.9 L6.2 8.0 Z" fill="#8a1d8e" transform="rotate(0 5 10.5)"/><path d="M3.8 8.0 L4.1 5.9 H5.9 L6.2 8.0 Z" fill="#8a1d8e" transform="rotate(60 5 10.5)"/><path d="M3.8 8.0 L4.1 5.9 H5.9 L6.2 8.0 Z" fill="#8a1d8e" transform="rotate(120 5 10.5)"/><path d="M3.8 8.0 L4.1 5.9 H5.9 L6.2 8.0 Z" fill="#8a1d8e" transform="rotate(180 5 10.5)"/><path d="M3.8 8.0 L4.1 5.9 H5.9 L6.2 8.0 Z" fill="#8a1d8e" transform="rotate(240 5 10.5)"/><path d="M3.8 8.0 L4.1 5.9 H5.9 L6.2 8.0 Z" fill="#8a1d8e" transform="rotate(300 5 10.5)"/><circle cx="5" cy="10.5" r="3.1" fill="#8a1d8e"/><circle cx="5" cy="10.5" r="1.45" fill="#f0f0f0"/></svg>
<div class="ttxt" style="top:788px;left:120px;">Fuel grade uranium, at regional</div>
<svg class="ic" style="left:99px;top:814px;width:14px;height:15px" viewBox="0 0 14 15"><path d="M2.6 1 H13.1 V14.7 H9.3 V13 H11.5 V2.6 H4.1 V5 H2.6 Z" fill="#8a1d8e"/><circle cx="5" cy="10.5" r="4.9" fill="#f0f0f0"/><path d="M3.8 8.0 L4.1 5.9 H5.9 L6.2 8.0 Z" fill="#8a1d8e" transform="rotate(0 5 10.5)"/><path d="M3.8 8.0 L4.1 5.9 H5.9 L6.2 8.0 Z" fill="#8a1d8e" transform="rotate(60 5 10.5)"/><path d="M3.8 8.0 L4.1 5.9 H5.9 L6.2 8.0 Z" fill="#8a1d8e" transform="rotate(120 5 10.5)"/><path d="M3.8 8.0 L4.1 5.9 H5.9 L6.2 8.0 Z" fill="#8a1d8e" transform="rotate(180 5 10.5)"/><path d="M3.8 8.0 L4.1 5.9 H5.9 L6.2 8.0 Z" fill="#8a1d8e" transform="rotate(240 5 10.5)"/><path d="M3.8 8.0 L4.1 5.9 H5.9 L6.2 8.0 Z" fill="#8a1d8e" transform="rotate(300 5 10.5)"/><circle cx="5" cy="10.5" r="3.1" fill="#8a1d8e"/><circle cx="5" cy="10.5" r="1.45" fill="#f0f0f0"/></svg>
<div class="ttxt" style="top:811px;left:120px;">Hydrochloric acid, HCl; MDI co-product</div>
<svg class="ic" style="left:99px;top:837px;width:14px;height:15px" viewBox="0 0 14 15"><path d="M2.6 1 H13.1 V14.7 H9.3 V13 H11.5 V2.6 H4.1 V5 H2.6 Z" fill="#8a1d8e"/><path d="M4.1 2.6 H11.5 V13 H9 L4.1 6.5 Z" fill="#8a1d8e"/><circle cx="5" cy="10.5" r="4.9" fill="#f0f0f0"/><path d="M3.8 8.0 L4.1 5.9 H5.9 L6.2 8.0 Z" fill="#8a1d8e" transform="rotate(0 5 10.5)"/><path d="M3.8 8.0 L4.1 5.9 H5.9 L6.2 8.0 Z" fill="#8a1d8e" transform="rotate(60 5 10.5)"/><path d="M3.8 8.0 L4.1 5.9 H5.9 L6.2 8.0 Z" fill="#8a1d8e" transform="rotate(120 5 10.5)"/><path d="M3.8 8.0 L4.1 5.9 H5.9 L6.2 8.0 Z" fill="#8a1d8e" transform="rotate(180 5 10.5)"/><path d="M3.8 8.0 L4.1 5.9 H5.9 L6.2 8.0 Z" fill="#8a1d8e" transform="rotate(240 5 10.5)"/><path d="M3.8 8.0 L4.1 5.9 H5.9 L6.2 8.0 Z" fill="#8a1d8e" transform="rotate(300 5 10.5)"/><circle cx="5" cy="10.5" r="3.1" fill="#8a1d8e"/><circle cx="5" cy="10.5" r="1.45" fill="#f0f0f0"/></svg>
<div class="ttxt" style="top:834px;left:120px;">Hydrochloric acid, without water</div>
<svg class="ic" style="left:99px;top:860px;width:14px;height:15px" viewBox="0 0 14 15"><path d="M2.6 1 H13.1 V14.7 H9.3 V13 H11.5 V2.6 H4.1 V5 H2.6 Z" fill="#8a1d8e"/><circle cx="5" cy="10.5" r="4.9" fill="#f0f0f0"/><path d="M3.8 8.0 L4.1 5.9 H5.9 L6.2 8.0 Z" fill="#8a1d8e" transform="rotate(0 5 10.5)"/><path d="M3.8 8.0 L4.1 5.9 H5.9 L6.2 8.0 Z" fill="#8a1d8e" transform="rotate(60 5 10.5)"/><path d="M3.8 8.0 L4.1 5.9 H5.9 L6.2 8.0 Z" fill="#8a1d8e" transform="rotate(120 5 10.5)"/><path d="M3.8 8.0 L4.1 5.9 H5.9 L6.2 8.0 Z" fill="#8a1d8e" transform="rotate(180 5 10.5)"/><path d="M3.8 8.0 L4.1 5.9 H5.9 L6.2 8.0 Z" fill="#8a1d8e" transform="rotate(240 5 10.5)"/><path d="M3.8 8.0 L4.1 5.9 H5.9 L6.2 8.0 Z" fill="#8a1d8e" transform="rotate(300 5 10.5)"/><circle cx="5" cy="10.5" r="3.1" fill="#8a1d8e"/><circle cx="5" cy="10.5" r="1.45" fill="#f0f0f0"/></svg>
<div class="ttxt" style="top:857px;left:120px;">Hydrogen, chlor-alkali average</div>
<svg class="ic" style="left:99px;top:883px;width:14px;height:15px" viewBox="0 0 14 15"><path d="M2.6 1 H13.1 V14.7 H9.3 V13 H11.5 V2.6 H4.1 V5 H2.6 Z" fill="#8a1d8e"/><circle cx="5" cy="10.5" r="4.9" fill="#f0f0f0"/><path d="M3.8 8.0 L4.1 5.9 H5.9 L6.2 8.0 Z" fill="#8a1d8e" transform="rotate(0 5 10.5)"/><path d="M3.8 8.0 L4.1 5.9 H5.9 L6.2 8.0 Z" fill="#8a1d8e" transform="rotate(60 5 10.5)"/><path d="M3.8 8.0 L4.1 5.9 H5.9 L6.2 8.0 Z" fill="#8a1d8e" transform="rotate(120 5 10.5)"/><path d="M3.8 8.0 L4.1 5.9 H5.9 L6.2 8.0 Z" fill="#8a1d8e" transform="rotate(180 5 10.5)"/><path d="M3.8 8.0 L4.1 5.9 H5.9 L6.2 8.0 Z" fill="#8a1d8e" transform="rotate(240 5 10.5)"/><path d="M3.8 8.0 L4.1 5.9 H5.9 L6.2 8.0 Z" fill="#8a1d8e" transform="rotate(300 5 10.5)"/><circle cx="5" cy="10.5" r="3.1" fill="#8a1d8e"/><circle cx="5" cy="10.5" r="1.45" fill="#f0f0f0"/></svg>
<div class="ttxt" style="top:880px;left:120px;">Hydrogen, liquid, synthesis gas</div></div>
</div>
<div style="left:312px;top:29px;width:1px;height:876px;background:#fbfbfb"></div>
<div style="left:313px;top:29px;width:20px;height:876px;background:#f0f0f0"></div>
<div style="left:313px;top:293px;width:19px;height:184px;background:#cdcdcd"></div>
<svg class="ic" style="left:317px;top:35px;width:11px;height:9px" viewBox="0 0 11 9"><path d="M1.3 8.2 L5.5 3 L9.7 8.2" fill="none" stroke="#505050" stroke-width="2" stroke-linejoin="round"/></svg>
<svg class="ic" style="left:317px;top:890px;width:11px;height:9px" viewBox="0 0 11 9"><path d="M1.3 0.8 L5.5 6 L9.7 0.8" fill="none" stroke="#505050" stroke-width="2" stroke-linejoin="round"/></svg>
<div style="left:0;top:905px;width:313px;height:1px;background:#fbfbfb"></div>
<div style="left:17px;top:906px;width:72px;height:19px;background:#cdcdcd"></div>
<svg class="ic" style="left:1px;top:910px;width:9px;height:11px" viewBox="0 0 9 11"><path d="M8.2 1.3 L3 5.5 L8.2 9.7" fill="none" stroke="#505050" stroke-width="2" stroke-linejoin="round"/></svg>
<svg class="ic" style="left:297px;top:910px;width:9px;height:11px" viewBox="0 0 9 11"><path d="M0.8 1.3 L6 5.5 L0.8 9.7" fill="none" stroke="#505050" stroke-width="2" stroke-linejoin="round"/></svg>
<div style="left:0;top:926px;width:333px;height:1px;background:#dcdcdc"></div>
<div style="left:333px;top:0;width:1px;height:930px;background:#e3e3e3"></div>
<div style="left:338px;top:0;width:1px;height:927px;background:#dadada"></div>
<div style="left:339px;top:0;width:1549px;height:902px;background:#fff"></div>
<div style="left:536px;top:0;width:1352px;height:29px;background:#f0f0f0;border-left:1px solid #d9d9d9;border-bottom:1px solid #d9d9d9"></div>
<svg class="ic" style="left:1870px;top:6px;width:14px;height:6px" viewBox="0 0 14 6"><rect x="1" y="1" width="11" height="4" fill="none" stroke="#000" stroke-width="1.6"/></svg>
<svg class="ic" style="left:343px;top:7px;width:14px;height:15px" viewBox="0 0 14 15"><path d="M2.6 1 H13.1 V14.7 H9.3 V13 H11.5 V2.6 H4.1 V5 H2.6 Z" fill="#8a1d8e"/><circle cx="5" cy="10.5" r="4.9" fill="#fff"/><path d="M3.8 8.0 L4.1 5.9 H5.9 L6.2 8.0 Z" fill="#8a1d8e" transform="rotate(0 5 10.5)"/><path d="M3.8 8.0 L4.1 5.9 H5.9 L6.2 8.0 Z" fill="#8a1d8e" transform="rotate(60 5 10.5)"/><path d="M3.8 8.0 L4.1 5.9 H5.9 L6.2 8.0 Z" fill="#8a1d8e" transform="rotate(120 5 10.5)"/><path d="M3.8 8.0 L4.1 5.9 H5.9 L6.2 8.0 Z" fill="#8a1d8e" transform="rotate(180 5 10.5)"/><path d="M3.8 8.0 L4.1 5.9 H5.9 L6.2 8.0 Z" fill="#8a1d8e" transform="rotate(240 5 10.5)"/><path d="M3.8 8.0 L4.1 5.9 H5.9 L6.2 8.0 Z" fill="#8a1d8e" transform="rotate(300 5 10.5)"/><circle cx="5" cy="10.5" r="3.1" fill="#8a1d8e"/><circle cx="5" cy="10.5" r="1.45" fill="#fff"/></svg>
<div class="ttxt" style="left:363px;top:3.5px">Aniline; at plant - RNA</div>
<svg class="ic" style="left:519px;top:11px;width:10px;height:10px" viewBox="0 0 10 10"><path d="M0.7 0.7 L9.3 9.3 M9.3 0.7 L0.7 9.3" stroke="#222" stroke-width="1.1"/></svg>
<svg class="ic" style="left:345px;top:46px;width:14px;height:15px" viewBox="0 0 14 15"><path d="M2.6 1 H13.1 V14.7 H9.3 V13 H11.5 V2.6 H4.1 V5 H2.6 Z" fill="#8a1d8e"/><circle cx="5" cy="10.5" r="4.9" fill="#fff"/><path d="M3.8 8.0 L4.1 5.9 H5.9 L6.2 8.0 Z" fill="#8a1d8e" transform="rotate(0 5 10.5)"/><path d="M3.8 8.0 L4.1 5.9 H5.9 L6.2 8.0 Z" fill="#8a1d8e" transform="rotate(60 5 10.5)"/><path d="M3.8 8.0 L4.1 5.9 H5.9 L6.2 8.0 Z" fill="#8a1d8e" transform="rotate(120 5 10.5)"/><path d="M3.8 8.0 L4.1 5.9 H5.9 L6.2 8.0 Z" fill="#8a1d8e" transform="rotate(180 5 10.5)"/><path d="M3.8 8.0 L4.1 5.9 H5.9 L6.2 8.0 Z" fill="#8a1d8e" transform="rotate(240 5 10.5)"/><path d="M3.8 8.0 L4.1 5.9 H5.9 L6.2 8.0 Z" fill="#8a1d8e" transform="rotate(300 5 10.5)"/><circle cx="5" cy="10.5" r="3.1" fill="#8a1d8e"/><circle cx="5" cy="10.5" r="1.45" fill="#fff"/></svg>
<div style="left:367px;top:40px;font-size:20px;font-weight:bold;color:#4a4a4a;white-space:nowrap;line-height:23px;letter-spacing:0.2px">Inputs/Outputs - Aniline; at plant - RNA</div>
<div class="sep" style="left:354px;top:85px;width:1534px"></div>
<svg class="ic" style="left:361px;top:97px;width:10px;height:6px" viewBox="0 0 10 6"><path d="M0.5 0.5 H9.5 L5 5.5 Z" fill="#333"/></svg>
<div class="sect" style="left:376px;top:90px">Inputs</div>
<svg class="ic" style="left:1828px;top:91px;width:14px;height:14px" viewBox="0 0 14 14"><circle cx="7" cy="7" r="6.8" fill="#3f9a2e"/><path d="M7 3.5 V10.5 M3.5 7 H10.5" stroke="#fff" stroke-width="2.2"/></svg>
<svg class="ic" style="left:1852px;top:93px;width:11px;height:11px" viewBox="0 0 11 11"><path d="M1 1 L10 10 M10 1 L1 10" stroke="#e8202a" stroke-width="1.5"/></svg>
<div style="left:1873px;top:93px;font-size:9px;font-weight:bold;color:#222;line-height:10px;white-space:nowrap">1.23</div>
<div class="sep" style="left:354px;top:487px;width:1534px"></div>
<svg class="ic" style="left:361px;top:499px;width:10px;height:6px" viewBox="0 0 10 6"><path d="M0.5 0.5 H9.5 L5 5.5 Z" fill="#333"/></svg>
<div class="sect" style="left:376px;top:492px">Outputs</div>
<svg class="ic" style="left:1828px;top:493px;width:14px;height:14px" viewBox="0 0 14 14"><circle cx="7" cy="7" r="6.8" fill="#3f9a2e"/><path d="M7 3.5 V10.5 M3.5 7 H10.5" stroke="#fff" stroke-width="2.2"/></svg>
<svg class="ic" style="left:1852px;top:495px;width:11px;height:11px" viewBox="0 0 11 11"><path d="M1 1 L10 10 M10 1 L1 10" stroke="#e8202a" stroke-width="1.5"/></svg>
<div style="left:1873px;top:495px;font-size:9px;font-weight:bold;color:#222;line-height:10px;white-space:nowrap">1.23</div>
<div class="tbl" style="left:370px;top:125px;width:1513px;height:348px"></div>
<div class="hcell" style="left:378px;top:127px;width:214px;">Flow</div>
<div class="hdiv" style="left:594px;top:127px;height:26px"></div>
<div class="hcell" style="left:601px;top:127px;width:214px;">Category</div>
<div class="hdiv" style="left:817px;top:127px;height:26px"></div>
<div class="hcell" style="left:817px;top:127px;width:110px;text-align:right;">Amount</div>
<div class="hdiv" style="left:932px;top:127px;height:26px"></div>
<div class="hcell" style="left:939px;top:127px;width:106px;">Unit</div>
<div class="hdiv" style="left:1047px;top:127px;height:26px"></div>
<div class="hcell" style="left:1054px;top:127px;width:106px;letter-spacing:-0.433px;">Costs/Revenues</div>
<div class="hdiv" style="left:1162px;top:127px;height:26px"></div>
<div class="hcell" style="left:1169px;top:127px;width:106px;">Uncertainty</div>
<div class="hdiv" style="left:1277px;top:127px;height:26px"></div>
<div class="hcell" style="left:1284px;top:127px;width:106px;">Avoided waste</div>
<div class="hdiv" style="left:1392px;top:127px;height:26px"></div>
<div class="hcell" style="left:1399px;top:127px;width:106px;">Provider</div>
<div class="hdiv" style="left:1507px;top:127px;height:26px"></div>
<div class="hcell" style="left:1514px;top:127px;width:106px;letter-spacing:-0.014px;">Data quality e...</div>
<div class="hdiv" style="left:1622px;top:127px;height:26px"></div>
<div class="hcell" style="left:1629px;top:127px;width:106px;">Location</div>
<div class="hdiv" style="left:1737px;top:127px;height:26px"></div>
<div class="hcell" style="left:1744px;top:127px;width:106px;">Description</div>
<div class="hdiv" style="left:1852px;top:127px;height:26px"></div>
<div class="vdiv" style="left:594px;top:153px;height:319px"></div>
<div class="vdiv" style="left:817px;top:153px;height:319px"></div>
<div class="vdiv" style="left:932px;top:153px;height:319px"></div>
<div class="vdiv" style="left:1047px;top:153px;height:319px"></div>
<div class="vdiv" style="left:1162px;top:153px;height:319px"></div>
<div class="vdiv" style="left:1277px;top:153px;height:319px"></div>
<div class="vdiv" style="left:1392px;top:153px;height:319px"></div>
<div class="vdiv" style="left:1507px;top:153px;height:319px"></div>
<div class="vdiv" style="left:1622px;top:153px;height:319px"></div>
<div class="vdiv" style="left:1737px;top:153px;height:319px"></div>
<div class="vdiv" style="left:1852px;top:153px;height:319px"></div>
<div class="hgrid" style="left:371px;top:176px;width:1510px"></div>
<div class="hgrid" style="left:371px;top:200px;width:1510px"></div>
<div class="hgrid" style="left:371px;top:224px;width:1510px"></div>
<div class="hgrid" style="left:371px;top:248px;width:1510px"></div>
<div class="hgrid" style="left:371px;top:272px;width:1510px"></div>
<div class="hgrid" style="left:371px;top:296px;width:1510px"></div>
<div class="hgrid" style="left:371px;top:320px;width:1510px"></div>
<div class="hgrid" style="left:371px;top:344px;width:1510px"></div>
<div class="hgrid" style="left:371px;top:368px;width:1510px"></div>
<div class="hgrid" style="left:371px;top:392px;width:1510px"></div>
<div class="hgrid" style="left:371px;top:416px;width:1510px"></div>
<div class="hgrid" style="left:371px;top:440px;width:1510px"></div>
<div class="hgrid" style="left:371px;top:464px;width:1510px"></div>
<svg class="ic" style="left:377px;top:158px;width:14px;height:14px" viewBox="0 0 14 14"><path d="M4.83 3.52 L5.87 3.06 L5.91 1.40 L8.09 1.40 L8.13 3.06 L9.17 3.52 L8.92 3.38 L9.85 4.05 L11.30 3.26 L12.39 5.14 L10.98 6.01 L11.10 7.14 L11.10 6.86 L10.98 7.99 L12.39 8.86 L11.30 10.74 L9.85 9.95 L8.92 10.62 L9.17 10.48 L8.13 10.94 L8.09 12.60 L5.91 12.60 L5.87 10.94 L4.83 10.48 L5.08 10.62 L4.15 9.95 L2.70 10.74 L1.61 8.86 L3.02 7.99 L2.90 6.86 L2.90 7.14 L3.02 6.01 L1.61 5.14 L2.70 3.26 L4.15 4.05 L5.08 3.38 Z" fill="#fff" stroke="#2a78d6" stroke-width="1.25" stroke-linejoin="round"/><circle cx="7" cy="7" r="1.9" fill="none" stroke="#2a78d6" stroke-width="1.2"/></svg>
<div class="cell" style="left:394px;top:154px;width:198px;;letter-spacing:-0.026px;">Ammonia, steam reforming,...</div>
<div class="cell" style="left:601px;top:154px;width:214px;;letter-spacing:-0.048px;">Technosphere Flows/31-33: M...</div>
<div class="cell" style="left:817px;top:154px;width:108px;text-align:right;;">0.20300</div>
<svg class="ic" style="left:934px;top:161px;width:14px;height:9px" viewBox="0 0 14 9"><rect x="0.6" y="0.6" width="12.8" height="7" rx="1" fill="none" stroke="#2a6079" stroke-width="1.2"/><path d="M3.2 1 V3.4 M6 1 V3.4 M8.8 1 V3.4 M11.2 1 V3.4" stroke="#2a6079" stroke-width="1.1"/></svg>
<div class="cell" style="left:957px;top:154px;width:80px;">kg</div>
<div class="cell" style="left:1169px;top:154px;width:106px;;">none</div>
<svg class="ic" style="left:1394px;top:158px;width:14px;height:15px" viewBox="0 0 14 15"><path d="M2.6 1 H13.1 V14.7 H9.3 V13 H11.5 V2.6 H4.1 V5 H2.6 Z" fill="#8a1d8e"/><circle cx="5" cy="10.5" r="4.9" fill="#fff"/><path d="M3.8 8.0 L4.1 5.9 H5.9 L6.2 8.0 Z" fill="#8a1d8e" transform="rotate(0 5 10.5)"/><path d="M3.8 8.0 L4.1 5.9 H5.9 L6.2 8.0 Z" fill="#8a1d8e" transform="rotate(60 5 10.5)"/><path d="M3.8 8.0 L4.1 5.9 H5.9 L6.2 8.0 Z" fill="#8a1d8e" transform="rotate(120 5 10.5)"/><path d="M3.8 8.0 L4.1 5.9 H5.9 L6.2 8.0 Z" fill="#8a1d8e" transform="rotate(180 5 10.5)"/><path d="M3.8 8.0 L4.1 5.9 H5.9 L6.2 8.0 Z" fill="#8a1d8e" transform="rotate(240 5 10.5)"/><path d="M3.8 8.0 L4.1 5.9 H5.9 L6.2 8.0 Z" fill="#8a1d8e" transform="rotate(300 5 10.5)"/><circle cx="5" cy="10.5" r="3.1" fill="#8a1d8e"/><circle cx="5" cy="10.5" r="1.45" fill="#fff"/></svg>
<div class="cell" style="left:1417px;top:154px;width:86px;;letter-spacing:-0.017px;">Ammonia, ...</div>
<svg class="ic" style="left:377px;top:182px;width:14px;height:14px" viewBox="0 0 14 14"><path d="M4.83 3.52 L5.87 3.06 L5.91 1.40 L8.09 1.40 L8.13 3.06 L9.17 3.52 L8.92 3.38 L9.85 4.05 L11.30 3.26 L12.39 5.14 L10.98 6.01 L11.10 7.14 L11.10 6.86 L10.98 7.99 L12.39 8.86 L11.30 10.74 L9.85 9.95 L8.92 10.62 L9.17 10.48 L8.13 10.94 L8.09 12.60 L5.91 12.60 L5.87 10.94 L4.83 10.48 L5.08 10.62 L4.15 9.95 L2.70 10.74 L1.61 8.86 L3.02 7.99 L2.90 6.86 L2.90 7.14 L3.02 6.01 L1.61 5.14 L2.70 3.26 L4.15 4.05 L5.08 3.38 Z" fill="#fff" stroke="#2a78d6" stroke-width="1.25" stroke-linejoin="round"/><circle cx="7" cy="7" r="1.9" fill="none" stroke="#2a78d6" stroke-width="1.2"/></svg>
<div class="cell" style="left:394px;top:178px;width:198px;;">Benzene, at plant - RNA</div>
<div class="cell" style="left:601px;top:178px;width:214px;;letter-spacing:-0.048px;">Technosphere Flows/31-33: M...</div>
<div class="cell" style="left:817px;top:178px;width:108px;text-align:right;;">0.84800</div>
<svg class="ic" style="left:934px;top:185px;width:14px;height:9px" viewBox="0 0 14 9"><rect x="0.6" y="0.6" width="12.8" height="7" rx="1" fill="none" stroke="#2a6079" stroke-width="1.2"/><path d="M3.2 1 V3.4 M6 1 V3.4 M8.8 1 V3.4 M11.2 1 V3.4" stroke="#2a6079" stroke-width="1.1"/></svg>
<div class="cell" style="left:957px;top:178px;width:80px;">kg</div>
<div class="cell" style="left:1169px;top:178px;width:106px;;">none</div>
<svg class="ic" style="left:1394px;top:182px;width:14px;height:15px" viewBox="0 0 14 15"><path d="M2.6 1 H13.1 V14.7 H9.3 V13 H11.5 V2.6 H4.1 V5 H2.6 Z" fill="#8a1d8e"/><circle cx="5" cy="10.5" r="4.9" fill="#fff"/><path d="M3.8 8.0 L4.1 5.9 H5.9 L6.2 8.0 Z" fill="#8a1d8e" transform="rotate(0 5 10.5)"/><path d="M3.8 8.0 L4.1 5.9 H5.9 L6.2 8.0 Z" fill="#8a1d8e" transform="rotate(60 5 10.5)"/><path d="M3.8 8.0 L4.1 5.9 H5.9 L6.2 8.0 Z" fill="#8a1d8e" transform="rotate(120 5 10.5)"/><path d="M3.8 8.0 L4.1 5.9 H5.9 L6.2 8.0 Z" fill="#8a1d8e" transform="rotate(180 5 10.5)"/><path d="M3.8 8.0 L4.1 5.9 H5.9 L6.2 8.0 Z" fill="#8a1d8e" transform="rotate(240 5 10.5)"/><path d="M3.8 8.0 L4.1 5.9 H5.9 L6.2 8.0 Z" fill="#8a1d8e" transform="rotate(300 5 10.5)"/><circle cx="5" cy="10.5" r="3.1" fill="#8a1d8e"/><circle cx="5" cy="10.5" r="1.45" fill="#fff"/></svg>
<div class="cell" style="left:1417px;top:178px;width:86px;;letter-spacing:-0.339px;">Benzene, a...</div>
<svg class="ic" style="left:377px;top:206px;width:14px;height:14px" viewBox="0 0 14 14"><path d="M4.83 3.52 L5.87 3.06 L5.91 1.40 L8.09 1.40 L8.13 3.06 L9.17 3.52 L8.92 3.38 L9.85 4.05 L11.30 3.26 L12.39 5.14 L10.98 6.01 L11.10 7.14 L11.10 6.86 L10.98 7.99 L12.39 8.86 L11.30 10.74 L9.85 9.95 L8.92 10.62 L9.17 10.48 L8.13 10.94 L8.09 12.60 L5.91 12.60 L5.87 10.94 L4.83 10.48 L5.08 10.62 L4.15 9.95 L2.70 10.74 L1.61 8.86 L3.02 7.99 L2.90 6.86 L2.90 7.14 L3.02 6.01 L1.61 5.14 L2.70 3.26 L4.15 4.05 L5.08 3.38 Z" fill="#fff" stroke="#2a78d6" stroke-width="1.25" stroke-linejoin="round"/><circle cx="7" cy="7" r="1.9" fill="none" stroke="#2a78d6" stroke-width="1.2"/><rect x="8.5" y="8.5" width="5" height="5" fill="#fff"/><rect x="9" y="9" width="4.2" height="4.2" fill="none" stroke="#777" stroke-width="1"/><rect x="8.5" y="8.3" width="5.2" height="1.2" fill="#777"/></svg>
<div class="cell" style="left:394px;top:202px;width:198px;;">Electricity, AC, 120 V</div>
<div class="cell" style="left:601px;top:202px;width:214px;;">Technosphere Flows/22: Utiliti...</div>
<div class="cell" style="left:817px;top:202px;width:108px;text-align:right;;">0.50040</div>
<svg class="ic" style="left:934px;top:209px;width:14px;height:9px" viewBox="0 0 14 9"><rect x="0.6" y="0.6" width="12.8" height="7" rx="1" fill="none" stroke="#2a6079" stroke-width="1.2"/><path d="M3.2 1 V3.4 M6 1 V3.4 M8.8 1 V3.4 M11.2 1 V3.4" stroke="#2a6079" stroke-width="1.1"/></svg>
<div class="cell" style="left:957px;top:202px;width:80px;">MJ</div>
<div class="cell" style="left:1169px;top:202px;width:106px;;">none</div>
<svg class="ic" style="left:1394px;top:206px;width:14px;height:15px" viewBox="0 0 14 15"><path d="M2.6 1 H13.1 V14.7 H9.3 V13 H11.5 V2.6 H4.1 V5 H2.6 Z" fill="#8a1d8e"/><circle cx="5" cy="10.5" r="4.9" fill="#fff"/><path d="M3.8 8.0 L4.1 5.9 H5.9 L6.2 8.0 Z" fill="#8a1d8e" transform="rotate(0 5 10.5)"/><path d="M3.8 8.0 L4.1 5.9 H5.9 L6.2 8.0 Z" fill="#8a1d8e" transform="rotate(60 5 10.5)"/><path d="M3.8 8.0 L4.1 5.9 H5.9 L6.2 8.0 Z" fill="#8a1d8e" transform="rotate(120 5 10.5)"/><path d="M3.8 8.0 L4.1 5.9 H5.9 L6.2 8.0 Z" fill="#8a1d8e" transform="rotate(180 5 10.5)"/><path d="M3.8 8.0 L4.1 5.9 H5.9 L6.2 8.0 Z" fill="#8a1d8e" transform="rotate(240 5 10.5)"/><path d="M3.8 8.0 L4.1 5.9 H5.9 L6.2 8.0 Z" fill="#8a1d8e" transform="rotate(300 5 10.5)"/><circle cx="5" cy="10.5" r="3.1" fill="#8a1d8e"/><circle cx="5" cy="10.5" r="1.45" fill="#fff"/><rect x="9" y="9.5" width="5" height="5" fill="#fff"/><rect x="9.5" y="10" width="4" height="4" fill="none" stroke="#888" stroke-width="1"/><rect x="9" y="9.6" width="5" height="1.2" fill="#888"/></svg>
<div class="cell" style="left:1417px;top:202px;width:86px;;letter-spacing:-0.063px;">Electricity; ...</div>
<svg class="ic" style="left:377px;top:230px;width:14px;height:14px" viewBox="0 0 14 14"><path d="M4.83 3.52 L5.87 3.06 L5.91 1.40 L8.09 1.40 L8.13 3.06 L9.17 3.52 L8.92 3.38 L9.85 4.05 L11.30 3.26 L12.39 5.14 L10.98 6.01 L11.10 7.14 L11.10 6.86 L10.98 7.99 L12.39 8.86 L11.30 10.74 L9.85 9.95 L8.92 10.62 L9.17 10.48 L8.13 10.94 L8.09 12.60 L5.91 12.60 L5.87 10.94 L4.83 10.48 L5.08 10.62 L4.15 9.95 L2.70 10.74 L1.61 8.86 L3.02 7.99 L2.90 6.86 L2.90 7.14 L3.02 6.01 L1.61 5.14 L2.70 3.26 L4.15 4.05 L5.08 3.38 Z" fill="#fff" stroke="#2a78d6" stroke-width="1.25" stroke-linejoin="round"/><circle cx="7" cy="7" r="1.9" fill="none" stroke="#2a78d6" stroke-width="1.2"/></svg>
<div class="cell" style="left:394px;top:226px;width:198px;;letter-spacing:-0.137px;">Electricity, at cogen, for natu...</div>
<div class="cell" style="left:601px;top:226px;width:214px;;">Technosphere Flows/22: Utiliti...</div>
<div class="cell" style="left:817px;top:226px;width:108px;text-align:right;;">0.05700</div>
<svg class="ic" style="left:934px;top:233px;width:14px;height:9px" viewBox="0 0 14 9"><rect x="0.6" y="0.6" width="12.8" height="7" rx="1" fill="none" stroke="#2a6079" stroke-width="1.2"/><path d="M3.2 1 V3.4 M6 1 V3.4 M8.8 1 V3.4 M11.2 1 V3.4" stroke="#2a6079" stroke-width="1.1"/></svg>
<div class="cell" style="left:957px;top:226px;width:80px;">kWh</div>
<div class="cell" style="left:1169px;top:226px;width:106px;;">none</div>
<svg class="ic" style="left:1394px;top:230px;width:14px;height:15px" viewBox="0 0 14 15"><path d="M2.6 1 H13.1 V14.7 H9.3 V13 H11.5 V2.6 H4.1 V5 H2.6 Z" fill="#8a1d8e"/><circle cx="5" cy="10.5" r="4.9" fill="#fff"/><path d="M3.8 8.0 L4.1 5.9 H5.9 L6.2 8.0 Z" fill="#8a1d8e" transform="rotate(0 5 10.5)"/><path d="M3.8 8.0 L4.1 5.9 H5.9 L6.2 8.0 Z" fill="#8a1d8e" transform="rotate(60 5 10.5)"/><path d="M3.8 8.0 L4.1 5.9 H5.9 L6.2 8.0 Z" fill="#8a1d8e" transform="rotate(120 5 10.5)"/><path d="M3.8 8.0 L4.1 5.9 H5.9 L6.2 8.0 Z" fill="#8a1d8e" transform="rotate(180 5 10.5)"/><path d="M3.8 8.0 L4.1 5.9 H5.9 L6.2 8.0 Z" fill="#8a1d8e" transform="rotate(240 5 10.5)"/><path d="M3.8 8.0 L4.1 5.9 H5.9 L6.2 8.0 Z" fill="#8a1d8e" transform="rotate(300 5 10.5)"/><circle cx="5" cy="10.5" r="3.1" fill="#8a1d8e"/><circle cx="5" cy="10.5" r="1.45" fill="#fff"/></svg>
<div class="cell" style="left:1417px;top:226px;width:86px;;">Electricity, ...</div>
<div class="cell" style="left:1744px;top:226px;width:106px;;">Electricity fro...</div>
<svg class="ic" style="left:377px;top:254px;width:14px;height:14px" viewBox="0 0 14 14"><path d="M4.83 3.52 L5.87 3.06 L5.91 1.40 L8.09 1.40 L8.13 3.06 L9.17 3.52 L8.92 3.38 L9.85 4.05 L11.30 3.26 L12.39 5.14 L10.98 6.01 L11.10 7.14 L11.10 6.86 L10.98 7.99 L12.39 8.86 L11.30 10.74 L9.85 9.95 L8.92 10.62 L9.17 10.48 L8.13 10.94 L8.09 12.60 L5.91 12.60 L5.87 10.94 L4.83 10.48 L5.08 10.62 L4.15 9.95 L2.70 10.74 L1.61 8.86 L3.02 7.99 L2.90 6.86 L2.90 7.14 L3.02 6.01 L1.61 5.14 L2.70 3.26 L4.15 4.05 L5.08 3.38 Z" fill="#fff" stroke="#2a78d6" stroke-width="1.25" stroke-linejoin="round"/><circle cx="7" cy="7" r="1.9" fill="none" stroke="#2a78d6" stroke-width="1.2"/></svg>
<div class="cell" style="left:394px;top:250px;width:198px;;">Hydrogen, at plant</div>
<div class="cell" style="left:601px;top:250px;width:214px;;letter-spacing:-0.048px;">Technosphere Flows/31-33: M...</div>
<div class="cell" style="left:817px;top:250px;width:108px;text-align:right;;">0.06700</div>
<svg class="ic" style="left:934px;top:257px;width:14px;height:9px" viewBox="0 0 14 9"><rect x="0.6" y="0.6" width="12.8" height="7" rx="1" fill="none" stroke="#2a6079" stroke-width="1.2"/><path d="M3.2 1 V3.4 M6 1 V3.4 M8.8 1 V3.4 M11.2 1 V3.4" stroke="#2a6079" stroke-width="1.1"/></svg>
<div class="cell" style="left:957px;top:250px;width:80px;">kg</div>
<div class="cell" style="left:1169px;top:250px;width:106px;;">none</div>
<svg class="ic" style="left:1394px;top:254px;width:14px;height:15px" viewBox="0 0 14 15"><path d="M2.6 1 H13.1 V14.7 H9.3 V13 H11.5 V2.6 H4.1 V5 H2.6 Z" fill="#8a1d8e"/><circle cx="5" cy="10.5" r="4.9" fill="#fff"/><path d="M3.8 8.0 L4.1 5.9 H5.9 L6.2 8.0 Z" fill="#8a1d8e" transform="rotate(0 5 10.5)"/><path d="M3.8 8.0 L4.1 5.9 H5.9 L6.2 8.0 Z" fill="#8a1d8e" transform="rotate(60 5 10.5)"/><path d="M3.8 8.0 L4.1 5.9 H5.9 L6.2 8.0 Z" fill="#8a1d8e" transform="rotate(120 5 10.5)"/><path d="M3.8 8.0 L4.1 5.9 H5.9 L6.2 8.0 Z" fill="#8a1d8e" transform="rotate(180 5 10.5)"/><path d="M3.8 8.0 L4.1 5.9 H5.9 L6.2 8.0 Z" fill="#8a1d8e" transform="rotate(240 5 10.5)"/><path d="M3.8 8.0 L4.1 5.9 H5.9 L6.2 8.0 Z" fill="#8a1d8e" transform="rotate(300 5 10.5)"/><circle cx="5" cy="10.5" r="3.1" fill="#8a1d8e"/><circle cx="5" cy="10.5" r="1.45" fill="#fff"/></svg>
<div class="cell" style="left:1417px;top:250px;width:86px;;letter-spacing:-0.145px;">Hydrogen, ...</div>
<svg class="ic" style="left:377px;top:278px;width:14px;height:14px" viewBox="0 0 14 14"><path d="M4.83 3.52 L5.87 3.06 L5.91 1.40 L8.09 1.40 L8.13 3.06 L9.17 3.52 L8.92 3.38 L9.85 4.05 L11.30 3.26 L12.39 5.14 L10.98 6.01 L11.10 7.14 L11.10 6.86 L10.98 7.99 L12.39 8.86 L11.30 10.74 L9.85 9.95 L8.92 10.62 L9.17 10.48 L8.13 10.94 L8.09 12.60 L5.91 12.60 L5.87 10.94 L4.83 10.48 L5.08 10.62 L4.15 9.95 L2.70 10.74 L1.61 8.86 L3.02 7.99 L2.90 6.86 L2.90 7.14 L3.02 6.01 L1.61 5.14 L2.70 3.26 L4.15 4.05 L5.08 3.38 Z" fill="#fff" stroke="#2a78d6" stroke-width="1.25" stroke-linejoin="round"/><circle cx="7" cy="7" r="1.9" fill="none" stroke="#2a78d6" stroke-width="1.2"/></svg>
<div class="cell" style="left:394px;top:274px;width:198px;;">Natural gas, combusted in i...</div>
<div class="cell" style="left:601px;top:274px;width:214px;;">Technosphere Flows/22: Utiliti...</div>
<div class="cell" style="left:817px;top:274px;width:108px;text-align:right;;">0.03120</div>
<svg class="ic" style="left:934px;top:281px;width:14px;height:9px" viewBox="0 0 14 9"><rect x="0.6" y="0.6" width="12.8" height="7" rx="1" fill="none" stroke="#2a6079" stroke-width="1.2"/><path d="M3.2 1 V3.4 M6 1 V3.4 M8.8 1 V3.4 M11.2 1 V3.4" stroke="#2a6079" stroke-width="1.1"/></svg>
<div class="cell" style="left:957px;top:274px;width:80px;">m3</div>
<div class="cell" style="left:1169px;top:274px;width:106px;;">none</div>
<svg class="ic" style="left:1394px;top:278px;width:14px;height:15px" viewBox="0 0 14 15"><path d="M2.6 1 H13.1 V14.7 H9.3 V13 H11.5 V2.6 H4.1 V5 H2.6 Z" fill="#8a1d8e"/><circle cx="5" cy="10.5" r="4.9" fill="#fff"/><path d="M3.8 8.0 L4.1 5.9 H5.9 L6.2 8.0 Z" fill="#8a1d8e" transform="rotate(0 5 10.5)"/><path d="M3.8 8.0 L4.1 5.9 H5.9 L6.2 8.0 Z" fill="#8a1d8e" transform="rotate(60 5 10.5)"/><path d="M3.8 8.0 L4.1 5.9 H5.9 L6.2 8.0 Z" fill="#8a1d8e" transform="rotate(120 5 10.5)"/><path d="M3.8 8.0 L4.1 5.9 H5.9 L6.2 8.0 Z" fill="#8a1d8e" transform="rotate(180 5 10.5)"/><path d="M3.8 8.0 L4.1 5.9 H5.9 L6.2 8.0 Z" fill="#8a1d8e" transform="rotate(240 5 10.5)"/><path d="M3.8 8.0 L4.1 5.9 H5.9 L6.2 8.0 Z" fill="#8a1d8e" transform="rotate(300 5 10.5)"/><circle cx="5" cy="10.5" r="3.1" fill="#8a1d8e"/><circle cx="5" cy="10.5" r="1.45" fill="#fff"/></svg>
<div class="cell" style="left:1417px;top:274px;width:86px;;">Natural ga...</div>
<svg class="ic" style="left:377px;top:302px;width:14px;height:14px" viewBox="0 0 14 14"><path d="M4.83 3.52 L5.87 3.06 L5.91 1.40 L8.09 1.40 L8.13 3.06 L9.17 3.52 L8.92 3.38 L9.85 4.05 L11.30 3.26 L12.39 5.14 L10.98 6.01 L11.10 7.14 L11.10 6.86 L10.98 7.99 L12.39 8.86 L11.30 10.74 L9.85 9.95 L8.92 10.62 L9.17 10.48 L8.13 10.94 L8.09 12.60 L5.91 12.60 L5.87 10.94 L4.83 10.48 L5.08 10.62 L4.15 9.95 L2.70 10.74 L1.61 8.86 L3.02 7.99 L2.90 6.86 L2.90 7.14 L3.02 6.01 L1.61 5.14 L2.70 3.26 L4.15 4.05 L5.08 3.38 Z" fill="#fff" stroke="#2a78d6" stroke-width="1.25" stroke-linejoin="round"/><circle cx="7" cy="7" r="1.9" fill="none" stroke="#2a78d6" stroke-width="1.2"/></svg>
<div class="cell" style="left:394px;top:298px;width:198px;;letter-spacing:-0.053px;">Sodium hydroxide; chlor-alk...</div>
<div class="cell" style="left:601px;top:298px;width:214px;;letter-spacing:-0.048px;">Technosphere Flows/31-33: M...</div>
<div class="cell" style="left:817px;top:298px;width:108px;text-align:right;;">0.01000</div>
<svg class="ic" style="left:934px;top:305px;width:14px;height:9px" viewBox="0 0 14 9"><rect x="0.6" y="0.6" width="12.8" height="7" rx="1" fill="none" stroke="#2a6079" stroke-width="1.2"/><path d="M3.2 1 V3.4 M6 1 V3.4 M8.8 1 V3.4 M11.2 1 V3.4" stroke="#2a6079" stroke-width="1.1"/></svg>
<div class="cell" style="left:957px;top:298px;width:80px;">kg</div>
<div class="cell" style="left:1169px;top:298px;width:106px;;">none</div>
<svg class="ic" style="left:1394px;top:302px;width:14px;height:15px" viewBox="0 0 14 15"><path d="M2.6 1 H13.1 V14.7 H9.3 V13 H11.5 V2.6 H4.1 V5 H2.6 Z" fill="#8a1d8e"/><circle cx="5" cy="10.5" r="4.9" fill="#fff"/><path d="M3.8 8.0 L4.1 5.9 H5.9 L6.2 8.0 Z" fill="#8a1d8e" transform="rotate(0 5 10.5)"/><path d="M3.8 8.0 L4.1 5.9 H5.9 L6.2 8.0 Z" fill="#8a1d8e" transform="rotate(60 5 10.5)"/><path d="M3.8 8.0 L4.1 5.9 H5.9 L6.2 8.0 Z" fill="#8a1d8e" transform="rotate(120 5 10.5)"/><path d="M3.8 8.0 L4.1 5.9 H5.9 L6.2 8.0 Z" fill="#8a1d8e" transform="rotate(180 5 10.5)"/><path d="M3.8 8.0 L4.1 5.9 H5.9 L6.2 8.0 Z" fill="#8a1d8e" transform="rotate(240 5 10.5)"/><path d="M3.8 8.0 L4.1 5.9 H5.9 L6.2 8.0 Z" fill="#8a1d8e" transform="rotate(300 5 10.5)"/><circle cx="5" cy="10.5" r="3.1" fill="#8a1d8e"/><circle cx="5" cy="10.5" r="1.45" fill="#fff"/></svg>
<div class="cell" style="left:1417px;top:298px;width:86px;;">Sodium hy...</div>
<svg class="ic" style="left:377px;top:326px;width:14px;height:14px" viewBox="0 0 14 14"><path d="M4.83 3.52 L5.87 3.06 L5.91 1.40 L8.09 1.40 L8.13 3.06 L9.17 3.52 L8.92 3.38 L9.85 4.05 L11.30 3.26 L12.39 5.14 L10.98 6.01 L11.10 7.14 L11.10 6.86 L10.98 7.99 L12.39 8.86 L11.30 10.74 L9.85 9.95 L8.92 10.62 L9.17 10.48 L8.13 10.94 L8.09 12.60 L5.91 12.60 L5.87 10.94 L4.83 10.48 L5.08 10.62 L4.15 9.95 L2.70 10.74 L1.61 8.86 L3.02 7.99 L2.90 6.86 L2.90 7.14 L3.02 6.01 L1.61 5.14 L2.70 3.26 L4.15 4.05 L5.08 3.38 Z" fill="#fff" stroke="#2a78d6" stroke-width="1.25" stroke-linejoin="round"/><circle cx="7" cy="7" r="1.9" fill="none" stroke="#2a78d6" stroke-width="1.2"/></svg>
<div class="cell" style="left:394px;top:322px;width:198px;;">Transport, combination truc...</div>
<div class="cell" style="left:601px;top:322px;width:214px;;letter-spacing:-0.047px;">Technosphere Flows/48-49: Tr...</div>
<div class="cell" style="left:817px;top:322px;width:108px;text-align:right;;">0.00032</div>
<svg class="ic" style="left:934px;top:329px;width:14px;height:9px" viewBox="0 0 14 9"><rect x="0.6" y="0.6" width="12.8" height="7" rx="1" fill="none" stroke="#2a6079" stroke-width="1.2"/><path d="M3.2 1 V3.4 M6 1 V3.4 M8.8 1 V3.4 M11.2 1 V3.4" stroke="#2a6079" stroke-width="1.1"/></svg>
<div class="cell" style="left:957px;top:322px;width:80px;">t*km</div>
<div class="cell" style="left:1169px;top:322px;width:106px;;">none</div>
<svg class="ic" style="left:1394px;top:326px;width:14px;height:15px" viewBox="0 0 14 15"><path d="M2.6 1 H13.1 V14.7 H9.3 V13 H11.5 V2.6 H4.1 V5 H2.6 Z" fill="#8a1d8e"/><circle cx="5" cy="10.5" r="4.9" fill="#fff"/><path d="M3.8 8.0 L4.1 5.9 H5.9 L6.2 8.0 Z" fill="#8a1d8e" transform="rotate(0 5 10.5)"/><path d="M3.8 8.0 L4.1 5.9 H5.9 L6.2 8.0 Z" fill="#8a1d8e" transform="rotate(60 5 10.5)"/><path d="M3.8 8.0 L4.1 5.9 H5.9 L6.2 8.0 Z" fill="#8a1d8e" transform="rotate(120 5 10.5)"/><path d="M3.8 8.0 L4.1 5.9 H5.9 L6.2 8.0 Z" fill="#8a1d8e" transform="rotate(180 5 10.5)"/><path d="M3.8 8.0 L4.1 5.9 H5.9 L6.2 8.0 Z" fill="#8a1d8e" transform="rotate(240 5 10.5)"/><path d="M3.8 8.0 L4.1 5.9 H5.9 L6.2 8.0 Z" fill="#8a1d8e" transform="rotate(300 5 10.5)"/><circle cx="5" cy="10.5" r="3.1" fill="#8a1d8e"/><circle cx="5" cy="10.5" r="1.45" fill="#fff"/></svg>
<div class="cell" style="left:1417px;top:322px;width:86px;;letter-spacing:-0.035px;">Transport, ...</div>
<svg class="ic" style="left:377px;top:350px;width:14px;height:14px" viewBox="0 0 14 14"><path d="M4.83 3.52 L5.87 3.06 L5.91 1.40 L8.09 1.40 L8.13 3.06 L9.17 3.52 L8.92 3.38 L9.85 4.05 L11.30 3.26 L12.39 5.14 L10.98 6.01 L11.10 7.14 L11.10 6.86 L10.98 7.99 L12.39 8.86 L11.30 10.74 L9.85 9.95 L8.92 10.62 L9.17 10.48 L8.13 10.94 L8.09 12.60 L5.91 12.60 L5.87 10.94 L4.83 10.48 L5.08 10.62 L4.15 9.95 L2.70 10.74 L1.61 8.86 L3.02 7.99 L2.90 6.86 L2.90 7.14 L3.02 6.01 L1.61 5.14 L2.70 3.26 L4.15 4.05 L5.08 3.38 Z" fill="#fff" stroke="#2a78d6" stroke-width="1.25" stroke-linejoin="round"/><circle cx="7" cy="7" r="1.9" fill="none" stroke="#2a78d6" stroke-width="1.2"/></svg>
<div class="cell" style="left:394px;top:346px;width:198px;;">Transport, pipeline, natural ...</div>
<div class="cell" style="left:601px;top:346px;width:214px;;letter-spacing:-0.047px;">Technosphere Flows/48-49: Tr...</div>
<div class="cell" style="left:817px;top:346px;width:108px;text-align:right;;">0.00320</div>
<svg class="ic" style="left:934px;top:353px;width:14px;height:9px" viewBox="0 0 14 9"><rect x="0.6" y="0.6" width="12.8" height="7" rx="1" fill="none" stroke="#2a6079" stroke-width="1.2"/><path d="M3.2 1 V3.4 M6 1 V3.4 M8.8 1 V3.4 M11.2 1 V3.4" stroke="#2a6079" stroke-width="1.1"/></svg>
<div class="cell" style="left:957px;top:346px;width:80px;">t*km</div>
<div class="cell" style="left:1169px;top:346px;width:106px;;">none</div>
<svg class="ic" style="left:1394px;top:350px;width:14px;height:15px" viewBox="0 0 14 15"><path d="M2.6 1 H13.1 V14.7 H9.3 V13 H11.5 V2.6 H4.1 V5 H2.6 Z" fill="#8a1d8e"/><circle cx="5" cy="10.5" r="4.9" fill="#fff"/><path d="M3.8 8.0 L4.1 5.9 H5.9 L6.2 8.0 Z" fill="#8a1d8e" transform="rotate(0 5 10.5)"/><path d="M3.8 8.0 L4.1 5.9 H5.9 L6.2 8.0 Z" fill="#8a1d8e" transform="rotate(60 5 10.5)"/><path d="M3.8 8.0 L4.1 5.9 H5.9 L6.2 8.0 Z" fill="#8a1d8e" transform="rotate(120 5 10.5)"/><path d="M3.8 8.0 L4.1 5.9 H5.9 L6.2 8.0 Z" fill="#8a1d8e" transform="rotate(180 5 10.5)"/><path d="M3.8 8.0 L4.1 5.9 H5.9 L6.2 8.0 Z" fill="#8a1d8e" transform="rotate(240 5 10.5)"/><path d="M3.8 8.0 L4.1 5.9 H5.9 L6.2 8.0 Z" fill="#8a1d8e" transform="rotate(300 5 10.5)"/><circle cx="5" cy="10.5" r="3.1" fill="#8a1d8e"/><circle cx="5" cy="10.5" r="1.45" fill="#fff"/></svg>
<div class="cell" style="left:1417px;top:346px;width:86px;;letter-spacing:-0.035px;">Transport, ...</div>
<svg class="ic" style="left:377px;top:374px;width:14px;height:14px" viewBox="0 0 14 14"><path d="M4.83 3.52 L5.87 3.06 L5.91 1.40 L8.09 1.40 L8.13 3.06 L9.17 3.52 L8.92 3.38 L9.85 4.05 L11.30 3.26 L12.39 5.14 L10.98 6.01 L11.10 7.14 L11.10 6.86 L10.98 7.99 L12.39 8.86 L11.30 10.74 L9.85 9.95 L8.92 10.62 L9.17 10.48 L8.13 10.94 L8.09 12.60 L5.91 12.60 L5.87 10.94 L4.83 10.48 L5.08 10.62 L4.15 9.95 L2.70 10.74 L1.61 8.86 L3.02 7.99 L2.90 6.86 L2.90 7.14 L3.02 6.01 L1.61 5.14 L2.70 3.26 L4.15 4.05 L5.08 3.38 Z" fill="#fff" stroke="#2a78d6" stroke-width="1.25" stroke-linejoin="round"/><circle cx="7" cy="7" r="1.9" fill="none" stroke="#2a78d6" stroke-width="1.2"/></svg>
<div class="cell" style="left:394px;top:370px;width:198px;;letter-spacing:-0.137px;">Transport, pipeline, unspecif...</div>
<div class="cell" style="left:601px;top:370px;width:214px;;letter-spacing:-0.047px;">Technosphere Flows/48-49: Tr...</div>
<div class="cell" style="left:817px;top:370px;width:108px;text-align:right;;">0.00200</div>
<svg class="ic" style="left:934px;top:377px;width:14px;height:9px" viewBox="0 0 14 9"><rect x="0.6" y="0.6" width="12.8" height="7" rx="1" fill="none" stroke="#2a6079" stroke-width="1.2"/><path d="M3.2 1 V3.4 M6 1 V3.4 M8.8 1 V3.4 M11.2 1 V3.4" stroke="#2a6079" stroke-width="1.1"/></svg>
<div class="cell" style="left:957px;top:370px;width:80px;">t*km</div>
<div class="cell" style="left:1169px;top:370px;width:106px;;">none</div>
<svg class="ic" style="left:1394px;top:374px;width:14px;height:15px" viewBox="0 0 14 15"><path d="M2.6 1 H13.1 V14.7 H9.3 V13 H11.5 V2.6 H4.1 V5 H2.6 Z" fill="#8a1d8e"/><circle cx="5" cy="10.5" r="4.9" fill="#fff"/><path d="M3.8 8.0 L4.1 5.9 H5.9 L6.2 8.0 Z" fill="#8a1d8e" transform="rotate(0 5 10.5)"/><path d="M3.8 8.0 L4.1 5.9 H5.9 L6.2 8.0 Z" fill="#8a1d8e" transform="rotate(60 5 10.5)"/><path d="M3.8 8.0 L4.1 5.9 H5.9 L6.2 8.0 Z" fill="#8a1d8e" transform="rotate(120 5 10.5)"/><path d="M3.8 8.0 L4.1 5.9 H5.9 L6.2 8.0 Z" fill="#8a1d8e" transform="rotate(180 5 10.5)"/><path d="M3.8 8.0 L4.1 5.9 H5.9 L6.2 8.0 Z" fill="#8a1d8e" transform="rotate(240 5 10.5)"/><path d="M3.8 8.0 L4.1 5.9 H5.9 L6.2 8.0 Z" fill="#8a1d8e" transform="rotate(300 5 10.5)"/><circle cx="5" cy="10.5" r="3.1" fill="#8a1d8e"/><circle cx="5" cy="10.5" r="1.45" fill="#fff"/></svg>
<div class="cell" style="left:1417px;top:370px;width:86px;;letter-spacing:-0.035px;">Transport, ...</div>
<svg class="ic" style="left:377px;top:398px;width:15px;height:15px" viewBox="0 0 15 15"><path d="M12.4 1.2 V6.5 A5.9 5.9 0 0 1 6.5 12.4 A5.5 5.5 0 0 1 1.1 7 A5.8 5.8 0 0 1 7 1.2 Z" fill="none" stroke="#23804a" stroke-width="1.3"/><path d="M3.6 10.4 L7.6 5.6" stroke="#7fb896" stroke-width="1.1"/></svg>
<div class="cell" style="left:394px;top:394px;width:198px;;">Water, fresh</div>
<div class="cell" style="left:601px;top:394px;width:214px;;">Elementary Flows/resource/w...</div>
<div class="cell" style="left:817px;top:394px;width:108px;text-align:right;;">0.00180</div>
<svg class="ic" style="left:934px;top:401px;width:14px;height:9px" viewBox="0 0 14 9"><rect x="0.6" y="0.6" width="12.8" height="7" rx="1" fill="none" stroke="#2a6079" stroke-width="1.2"/><path d="M3.2 1 V3.4 M6 1 V3.4 M8.8 1 V3.4 M11.2 1 V3.4" stroke="#2a6079" stroke-width="1.1"/></svg>
<div class="cell" style="left:957px;top:394px;width:80px;">m3</div>
<div class="cell" style="left:1169px;top:394px;width:106px;;">none</div>
<div class="tbl" style="left:370px;top:527px;width:1513px;height:349px"></div>
<div class="hcell" style="left:378px;top:529px;width:214px;">Flow</div>
<div class="hdiv" style="left:594px;top:529px;height:26px"></div>
<div class="hcell" style="left:601px;top:529px;width:214px;">Category</div>
<div class="hdiv" style="left:817px;top:529px;height:26px"></div>
<div class="hcell" style="left:817px;top:529px;width:110px;text-align:right;">Amount</div>
<div class="hdiv" style="left:932px;top:529px;height:26px"></div>
<div class="hcell" style="left:939px;top:529px;width:106px;">Unit</div>
<div class="hdiv" style="left:1047px;top:529px;height:26px"></div>
<div class="hcell" style="left:1054px;top:529px;width:106px;letter-spacing:-0.433px;">Costs/Revenues</div>
<div class="hdiv" style="left:1162px;top:529px;height:26px"></div>
<div class="hcell" style="left:1169px;top:529px;width:106px;">Uncertainty</div>
<div class="hdiv" style="left:1277px;top:529px;height:26px"></div>
<div class="hcell" style="left:1284px;top:529px;width:106px;">Avoided prod...</div>
<div class="hdiv" style="left:1392px;top:529px;height:26px"></div>
<div class="hcell" style="left:1399px;top:529px;width:106px;">Provider</div>
<div class="hdiv" style="left:1507px;top:529px;height:26px"></div>
<div class="hcell" style="left:1514px;top:529px;width:106px;letter-spacing:-0.014px;">Data quality e...</div>
<div class="hdiv" style="left:1622px;top:529px;height:26px"></div>
<div class="hcell" style="left:1629px;top:529px;width:106px;">Location</div>
<div class="hdiv" style="left:1737px;top:529px;height:26px"></div>
<div class="hcell" style="left:1744px;top:529px;width:106px;">Description</div>
<div class="hdiv" style="left:1852px;top:529px;height:26px"></div>
<div class="vdiv" style="left:594px;top:555px;height:320px"></div>
<div class="vdiv" style="left:817px;top:555px;height:320px"></div>
<div class="vdiv" style="left:932px;top:555px;height:320px"></div>
<div class="vdiv" style="left:1047px;top:555px;height:320px"></div>
<div class="vdiv" style="left:1162px;top:555px;height:320px"></div>
<div class="vdiv" style="left:1277px;top:555px;height:320px"></div>
<div class="vdiv" style="left:1392px;top:555px;height:320px"></div>
<div class="vdiv" style="left:1507px;top:555px;height:320px"></div>
<div class="vdiv" style="left:1622px;top:555px;height:320px"></div>
<div class="vdiv" style="left:1737px;top:555px;height:320px"></div>
<div class="vdiv" style="left:1852px;top:555px;height:320px"></div>
<div class="hgrid" style="left:371px;top:578px;width:1489px"></div>
<div class="hgrid" style="left:371px;top:602px;width:1489px"></div>
<div class="hgrid" style="left:371px;top:626px;width:1489px"></div>
<div class="hgrid" style="left:371px;top:650px;width:1489px"></div>
<div class="hgrid" style="left:371px;top:674px;width:1489px"></div>
<div class="hgrid" style="left:371px;top:698px;width:1489px"></div>
<div class="hgrid" style="left:371px;top:722px;width:1489px"></div>
<div class="hgrid" style="left:371px;top:746px;width:1489px"></div>
<div class="hgrid" style="left:371px;top:770px;width:1489px"></div>
<div class="hgrid" style="left:371px;top:794px;width:1489px"></div>
<div class="hgrid" style="left:371px;top:818px;width:1489px"></div>
<div class="hgrid" style="left:371px;top:842px;width:1489px"></div>
<div class="hgrid" style="left:371px;top:866px;width:1489px"></div>
<svg class="ic" style="left:377px;top:560px;width:14px;height:14px" viewBox="0 0 14 14"><path d="M4.83 3.52 L5.87 3.06 L5.91 1.40 L8.09 1.40 L8.13 3.06 L9.17 3.52 L8.92 3.38 L9.85 4.05 L11.30 3.26 L12.39 5.14 L10.98 6.01 L11.10 7.14 L11.10 6.86 L10.98 7.99 L12.39 8.86 L11.30 10.74 L9.85 9.95 L8.92 10.62 L9.17 10.48 L8.13 10.94 L8.09 12.60 L5.91 12.60 L5.87 10.94 L4.83 10.48 L5.08 10.62 L4.15 9.95 L2.70 10.74 L1.61 8.86 L3.02 7.99 L2.90 6.86 L2.90 7.14 L3.02 6.01 L1.61 5.14 L2.70 3.26 L4.15 4.05 L5.08 3.38 Z" fill="#fff" stroke="#2a78d6" stroke-width="1.25" stroke-linejoin="round"/><circle cx="7" cy="7" r="1.9" fill="none" stroke="#2a78d6" stroke-width="1.2"/></svg>
<div class="cell" style="left:394px;top:556px;width:198px;font-weight:bold;">Aniline, at plant - RNA</div>
<div class="cell" style="left:601px;top:556px;width:214px;font-weight:bold;">Technosphere Flows/31-33:...</div>
<div class="cell" style="left:817px;top:556px;width:108px;text-align:right;font-weight:bold;">1.00000</div>
<svg class="ic" style="left:934px;top:563px;width:14px;height:9px" viewBox="0 0 14 9"><rect x="0.6" y="0.6" width="12.8" height="7" rx="1" fill="none" stroke="#2a6079" stroke-width="1.2"/><path d="M3.2 1 V3.4 M6 1 V3.4 M8.8 1 V3.4 M11.2 1 V3.4" stroke="#2a6079" stroke-width="1.1"/></svg>
<div class="cell" style="left:957px;top:556px;width:80px;font-weight:bold">kg</div>
<div class="cell" style="left:1169px;top:556px;width:106px;font-weight:bold;">none</div>
<svg class="ic" style="left:377px;top:584px;width:14px;height:14px" viewBox="0 0 14 14"><path d="M4.83 3.52 L5.87 3.06 L5.91 1.40 L8.09 1.40 L8.13 3.06 L9.17 3.52 L8.92 3.38 L9.85 4.05 L11.30 3.26 L12.39 5.14 L10.98 6.01 L11.10 7.14 L11.10 6.86 L10.98 7.99 L12.39 8.86 L11.30 10.74 L9.85 9.95 L8.92 10.62 L9.17 10.48 L8.13 10.94 L8.09 12.60 L5.91 12.60 L5.87 10.94 L4.83 10.48 L5.08 10.62 L4.15 9.95 L2.70 10.74 L1.61 8.86 L3.02 7.99 L2.90 6.86 L2.90 7.14 L3.02 6.01 L1.61 5.14 L2.70 3.26 L4.15 4.05 L5.08 3.38 Z" fill="#fff" stroke="#2a78d6" stroke-width="1.25" stroke-linejoin="round"/><circle cx="7" cy="7" r="1.9" fill="none" stroke="#2a78d6" stroke-width="1.2"/></svg>
<div class="cell" style="left:394px;top:580px;width:198px;font-style:italic;letter-spacing:-0.213px;">Natural gas, combusted in in...</div>
<div class="cell" style="left:601px;top:580px;width:214px;font-style:italic;letter-spacing:-0.247px;">Technosphere Flows/22: Utilitie...</div>
<div class="cell" style="left:817px;top:580px;width:108px;text-align:right;font-style:italic;">0.14400</div>
<svg class="ic" style="left:934px;top:587px;width:14px;height:9px" viewBox="0 0 14 9"><rect x="0.6" y="0.6" width="12.8" height="7" rx="1" fill="none" stroke="#2a6079" stroke-width="1.2"/><path d="M3.2 1 V3.4 M6 1 V3.4 M8.8 1 V3.4 M11.2 1 V3.4" stroke="#2a6079" stroke-width="1.1"/></svg>
<div class="cell" style="left:957px;top:580px;width:80px;font-style:italic">m3</div>
<div class="cell" style="left:1169px;top:580px;width:106px;font-style:italic;">none</div>
<svg class="ic" style="left:1280px;top:585px;width:12px;height:12px" viewBox="0 0 12 12"><rect x="0.6" y="0.6" width="10.8" height="10.8" rx="1.8" fill="#fff" stroke="#6a6a6a" stroke-width="1.2"/><path d="M3 5.6 L5 7.6 L8.8 3.6" fill="none" stroke="#5a5a5a" stroke-width="1.2"/></svg>
<svg class="ic" style="left:1394px;top:584px;width:14px;height:15px" viewBox="0 0 14 15"><path d="M2.6 1 H13.1 V14.7 H9.3 V13 H11.5 V2.6 H4.1 V5 H2.6 Z" fill="#8a1d8e"/><circle cx="5" cy="10.5" r="4.9" fill="#fff"/><path d="M3.8 8.0 L4.1 5.9 H5.9 L6.2 8.0 Z" fill="#8a1d8e" transform="rotate(0 5 10.5)"/><path d="M3.8 8.0 L4.1 5.9 H5.9 L6.2 8.0 Z" fill="#8a1d8e" transform="rotate(60 5 10.5)"/><path d="M3.8 8.0 L4.1 5.9 H5.9 L6.2 8.0 Z" fill="#8a1d8e" transform="rotate(120 5 10.5)"/><path d="M3.8 8.0 L4.1 5.9 H5.9 L6.2 8.0 Z" fill="#8a1d8e" transform="rotate(180 5 10.5)"/><path d="M3.8 8.0 L4.1 5.9 H5.9 L6.2 8.0 Z" fill="#8a1d8e" transform="rotate(240 5 10.5)"/><path d="M3.8 8.0 L4.1 5.9 H5.9 L6.2 8.0 Z" fill="#8a1d8e" transform="rotate(300 5 10.5)"/><circle cx="5" cy="10.5" r="3.1" fill="#8a1d8e"/><circle cx="5" cy="10.5" r="1.45" fill="#fff"/></svg>
<div class="cell" style="left:1417px;top:580px;width:86px;font-style:italic;">Natural ga...</div>
<svg class="ic" style="left:377px;top:608px;width:14px;height:14px" viewBox="0 0 14 14"><path d="M2.2 2.2 V11.3 Q2.2 12.6 3.5 12.6 H10.5 Q11.8 12.6 11.8 11.3 V2.2" fill="none" stroke="#de4d2e" stroke-width="1.2"/><path d="M1.2 1.9 H12.8" stroke="#de4d2e" stroke-width="1.3"/><path d="M5.5 4.3 V10.4 M8.5 4.3 V10.4" stroke="#de4d2e" stroke-width="1.1" stroke-linecap="round"/></svg>
<div class="cell" style="left:394px;top:604px;width:198px;;letter-spacing:-0.267px;">Disposal, hazardous waste, t...</div>
<div class="cell" style="left:601px;top:604px;width:214px;;letter-spacing:-0.482px;">Technosphere Flows/CUTOFF F...</div>
<div class="cell" style="left:817px;top:604px;width:108px;text-align:right;;">0.00100</div>
<svg class="ic" style="left:934px;top:611px;width:14px;height:9px" viewBox="0 0 14 9"><rect x="0.6" y="0.6" width="12.8" height="7" rx="1" fill="none" stroke="#2a6079" stroke-width="1.2"/><path d="M3.2 1 V3.4 M6 1 V3.4 M8.8 1 V3.4 M11.2 1 V3.4" stroke="#2a6079" stroke-width="1.1"/></svg>
<div class="cell" style="left:957px;top:604px;width:80px;">kg</div>
<div class="cell" style="left:1169px;top:604px;width:106px;;">none</div>
<svg class="ic" style="left:377px;top:632px;width:14px;height:14px" viewBox="0 0 14 14"><path d="M2.2 2.2 V11.3 Q2.2 12.6 3.5 12.6 H10.5 Q11.8 12.6 11.8 11.3 V2.2" fill="none" stroke="#de4d2e" stroke-width="1.2"/><path d="M1.2 1.9 H12.8" stroke="#de4d2e" stroke-width="1.3"/><path d="M5.5 4.3 V10.4 M8.5 4.3 V10.4" stroke="#de4d2e" stroke-width="1.1" stroke-linecap="round"/></svg>
<div class="cell" style="left:394px;top:628px;width:198px;;letter-spacing:-0.078px;">Disposal, solid waste, proce...</div>
<div class="cell" style="left:601px;top:628px;width:214px;;letter-spacing:-0.482px;">Technosphere Flows/CUTOFF F...</div>
<div class="cell" style="left:817px;top:628px;width:108px;text-align:right;;">1.00000E-6</div>
<svg class="ic" style="left:934px;top:635px;width:14px;height:9px" viewBox="0 0 14 9"><rect x="0.6" y="0.6" width="12.8" height="7" rx="1" fill="none" stroke="#2a6079" stroke-width="1.2"/><path d="M3.2 1 V3.4 M6 1 V3.4 M8.8 1 V3.4 M11.2 1 V3.4" stroke="#2a6079" stroke-width="1.1"/></svg>
<div class="cell" style="left:957px;top:628px;width:80px;">kg</div>
<div class="cell" style="left:1169px;top:628px;width:106px;;">none</div>
<svg class="ic" style="left:377px;top:656px;width:14px;height:14px" viewBox="0 0 14 14"><path d="M2.2 2.2 V11.3 Q2.2 12.6 3.5 12.6 H10.5 Q11.8 12.6 11.8 11.3 V2.2" fill="none" stroke="#de4d2e" stroke-width="1.2"/><path d="M1.2 1.9 H12.8" stroke="#de4d2e" stroke-width="1.3"/><path d="M5.5 4.3 V10.4 M8.5 4.3 V10.4" stroke="#de4d2e" stroke-width="1.1" stroke-linecap="round"/></svg>
<div class="cell" style="left:394px;top:652px;width:198px;;letter-spacing:-0.076px;">Recycling, solid waste, to re...</div>
<div class="cell" style="left:601px;top:652px;width:214px;;letter-spacing:-0.482px;">Technosphere Flows/CUTOFF F...</div>
<div class="cell" style="left:817px;top:652px;width:108px;text-align:right;;">1.00000E-5</div>
<svg class="ic" style="left:934px;top:659px;width:14px;height:9px" viewBox="0 0 14 9"><rect x="0.6" y="0.6" width="12.8" height="7" rx="1" fill="none" stroke="#2a6079" stroke-width="1.2"/><path d="M3.2 1 V3.4 M6 1 V3.4 M8.8 1 V3.4 M11.2 1 V3.4" stroke="#2a6079" stroke-width="1.1"/></svg>
<div class="cell" style="left:957px;top:652px;width:80px;">kg</div>
<div class="cell" style="left:1169px;top:652px;width:106px;;">none</div>
<svg class="ic" style="left:377px;top:680px;width:15px;height:15px" viewBox="0 0 15 15"><path d="M12.4 1.2 V6.5 A5.9 5.9 0 0 1 6.5 12.4 A5.5 5.5 0 0 1 1.1 7 A5.8 5.8 0 0 1 7 1.2 Z" fill="none" stroke="#23804a" stroke-width="1.3"/><path d="M3.6 10.4 L7.6 5.6" stroke="#7fb896" stroke-width="1.1"/><rect x="8.6" y="9.6" width="5.2" height="4.6" fill="#fff"/><path d="M9.2 10.2 V13.6 H13.2 V10.2" fill="none" stroke="#666" stroke-width="1.1"/><rect x="8" y="9.2" width="6.6" height="1.2" fill="#666"/></svg>
<div class="cell" style="left:394px;top:676px;width:198px;;">Ammonia</div>
<div class="cell" style="left:601px;top:676px;width:214px;;">Elementary Flows/emission/air</div>
<div class="cell" style="left:817px;top:676px;width:108px;text-align:right;;">1.00000E-6</div>
<svg class="ic" style="left:934px;top:683px;width:14px;height:9px" viewBox="0 0 14 9"><rect x="0.6" y="0.6" width="12.8" height="7" rx="1" fill="none" stroke="#2a6079" stroke-width="1.2"/><path d="M3.2 1 V3.4 M6 1 V3.4 M8.8 1 V3.4 M11.2 1 V3.4" stroke="#2a6079" stroke-width="1.1"/></svg>
<div class="cell" style="left:957px;top:676px;width:80px;">kg</div>
<div class="cell" style="left:1169px;top:676px;width:106px;;">none</div>
<div class="cell" style="left:1744px;top:676px;width:106px;;letter-spacing:-0.065px;">This data was...</div>
<svg class="ic" style="left:377px;top:704px;width:15px;height:15px" viewBox="0 0 15 15"><path d="M12.4 1.2 V6.5 A5.9 5.9 0 0 1 6.5 12.4 A5.5 5.5 0 0 1 1.1 7 A5.8 5.8 0 0 1 7 1.2 Z" fill="none" stroke="#23804a" stroke-width="1.3"/><path d="M3.6 10.4 L7.6 5.6" stroke="#7fb896" stroke-width="1.1"/><rect x="8.6" y="9.6" width="5.2" height="4.6" fill="#fff"/><path d="M9.2 10.2 V13.6 H13.2 V10.2" fill="none" stroke="#666" stroke-width="1.1"/><rect x="8" y="9.2" width="6.6" height="1.2" fill="#666"/></svg>
<div class="cell" style="left:394px;top:700px;width:198px;;">Aniline</div>
<div class="cell" style="left:601px;top:700px;width:214px;;">Elementary Flows/emission/w...</div>
<div class="cell" style="left:817px;top:700px;width:108px;text-align:right;;">0.00010</div>
<svg class="ic" style="left:934px;top:707px;width:14px;height:9px" viewBox="0 0 14 9"><rect x="0.6" y="0.6" width="12.8" height="7" rx="1" fill="none" stroke="#2a6079" stroke-width="1.2"/><path d="M3.2 1 V3.4 M6 1 V3.4 M8.8 1 V3.4 M11.2 1 V3.4" stroke="#2a6079" stroke-width="1.1"/></svg>
<div class="cell" style="left:957px;top:700px;width:80px;">kg</div>
<div class="cell" style="left:1169px;top:700px;width:106px;;">none</div>
<div class="cell" style="left:1744px;top:700px;width:106px;;letter-spacing:-0.065px;">This data was...</div>
<svg class="ic" style="left:377px;top:728px;width:15px;height:15px" viewBox="0 0 15 15"><path d="M12.4 1.2 V6.5 A5.9 5.9 0 0 1 6.5 12.4 A5.5 5.5 0 0 1 1.1 7 A5.8 5.8 0 0 1 7 1.2 Z" fill="none" stroke="#23804a" stroke-width="1.3"/><path d="M3.6 10.4 L7.6 5.6" stroke="#7fb896" stroke-width="1.1"/><rect x="8.6" y="9.6" width="5.2" height="4.6" fill="#fff"/><path d="M9.2 10.2 V13.6 H13.2 V10.2" fill="none" stroke="#666" stroke-width="1.1"/><rect x="8" y="9.2" width="6.6" height="1.2" fill="#666"/></svg>
<div class="cell" style="left:394px;top:724px;width:198px;;">Biological Oxygen Demand</div>
<div class="cell" style="left:601px;top:724px;width:214px;;">Elementary Flows/emission/w...</div>
<div class="cell" style="left:817px;top:724px;width:108px;text-align:right;;">1.00000E-6</div>
<svg class="ic" style="left:934px;top:731px;width:14px;height:9px" viewBox="0 0 14 9"><rect x="0.6" y="0.6" width="12.8" height="7" rx="1" fill="none" stroke="#2a6079" stroke-width="1.2"/><path d="M3.2 1 V3.4 M6 1 V3.4 M8.8 1 V3.4 M11.2 1 V3.4" stroke="#2a6079" stroke-width="1.1"/></svg>
<div class="cell" style="left:957px;top:724px;width:80px;">kg</div>
<div class="cell" style="left:1169px;top:724px;width:106px;;">none</div>
<div class="cell" style="left:1744px;top:724px;width:106px;;letter-spacing:-0.065px;">This data was...</div>
<svg class="ic" style="left:377px;top:752px;width:15px;height:15px" viewBox="0 0 15 15"><path d="M12.4 1.2 V6.5 A5.9 5.9 0 0 1 6.5 12.4 A5.5 5.5 0 0 1 1.1 7 A5.8 5.8 0 0 1 7 1.2 Z" fill="none" stroke="#23804a" stroke-width="1.3"/><path d="M3.6 10.4 L7.6 5.6" stroke="#7fb896" stroke-width="1.1"/><rect x="8.6" y="9.6" width="5.2" height="4.6" fill="#fff"/><path d="M9.2 10.2 V13.6 H13.2 V10.2" fill="none" stroke="#666" stroke-width="1.1"/><rect x="8" y="9.2" width="6.6" height="1.2" fill="#666"/></svg>
<div class="cell" style="left:394px;top:748px;width:198px;;">Carbon dioxide</div>
<div class="cell" style="left:601px;top:748px;width:214px;;">Elementary Flows/emission/air</div>
<div class="cell" style="left:817px;top:748px;width:108px;text-align:right;;">0.01000</div>
<svg class="ic" style="left:934px;top:755px;width:14px;height:9px" viewBox="0 0 14 9"><rect x="0.6" y="0.6" width="12.8" height="7" rx="1" fill="none" stroke="#2a6079" stroke-width="1.2"/><path d="M3.2 1 V3.4 M6 1 V3.4 M8.8 1 V3.4 M11.2 1 V3.4" stroke="#2a6079" stroke-width="1.1"/></svg>
<div class="cell" style="left:957px;top:748px;width:80px;">kg</div>
<div class="cell" style="left:1169px;top:748px;width:106px;;">none</div>
<div class="cell" style="left:1744px;top:748px;width:106px;;letter-spacing:-0.065px;">This data was...</div>
<svg class="ic" style="left:377px;top:776px;width:15px;height:15px" viewBox="0 0 15 15"><path d="M12.4 1.2 V6.5 A5.9 5.9 0 0 1 6.5 12.4 A5.5 5.5 0 0 1 1.1 7 A5.8 5.8 0 0 1 7 1.2 Z" fill="none" stroke="#23804a" stroke-width="1.3"/><path d="M3.6 10.4 L7.6 5.6" stroke="#7fb896" stroke-width="1.1"/><rect x="8.6" y="9.6" width="5.2" height="4.6" fill="#fff"/><path d="M9.2 10.2 V13.6 H13.2 V10.2" fill="none" stroke="#666" stroke-width="1.1"/><rect x="8" y="9.2" width="6.6" height="1.2" fill="#666"/></svg>
<div class="cell" style="left:394px;top:772px;width:198px;;">Carbon monoxide</div>
<div class="cell" style="left:601px;top:772px;width:214px;;">Elementary Flows/emission/air</div>
<div class="cell" style="left:817px;top:772px;width:108px;text-align:right;;">1.00000E-5</div>
<svg class="ic" style="left:934px;top:779px;width:14px;height:9px" viewBox="0 0 14 9"><rect x="0.6" y="0.6" width="12.8" height="7" rx="1" fill="none" stroke="#2a6079" stroke-width="1.2"/><path d="M3.2 1 V3.4 M6 1 V3.4 M8.8 1 V3.4 M11.2 1 V3.4" stroke="#2a6079" stroke-width="1.1"/></svg>
<div class="cell" style="left:957px;top:772px;width:80px;">kg</div>
<div class="cell" style="left:1169px;top:772px;width:106px;;">none</div>
<div class="cell" style="left:1744px;top:772px;width:106px;;letter-spacing:-0.065px;">This data was...</div>
<svg class="ic" style="left:377px;top:800px;width:15px;height:15px" viewBox="0 0 15 15"><path d="M12.4 1.2 V6.5 A5.9 5.9 0 0 1 6.5 12.4 A5.5 5.5 0 0 1 1.1 7 A5.8 5.8 0 0 1 7 1.2 Z" fill="none" stroke="#23804a" stroke-width="1.3"/><path d="M3.6 10.4 L7.6 5.6" stroke="#7fb896" stroke-width="1.1"/><rect x="8.6" y="9.6" width="5.2" height="4.6" fill="#fff"/><path d="M9.2 10.2 V13.6 H13.2 V10.2" fill="none" stroke="#666" stroke-width="1.1"/><rect x="8" y="9.2" width="6.6" height="1.2" fill="#666"/></svg>
<div class="cell" style="left:394px;top:796px;width:198px;;">Chlorine</div>
<div class="cell" style="left:601px;top:796px;width:214px;;">Elementary Flows/emission/air</div>
<div class="cell" style="left:817px;top:796px;width:108px;text-align:right;;">1.00000E-8</div>
<svg class="ic" style="left:934px;top:803px;width:14px;height:9px" viewBox="0 0 14 9"><rect x="0.6" y="0.6" width="12.8" height="7" rx="1" fill="none" stroke="#2a6079" stroke-width="1.2"/><path d="M3.2 1 V3.4 M6 1 V3.4 M8.8 1 V3.4 M11.2 1 V3.4" stroke="#2a6079" stroke-width="1.1"/></svg>
<div class="cell" style="left:957px;top:796px;width:80px;">kg</div>
<div class="cell" style="left:1169px;top:796px;width:106px;;">none</div>
<div class="cell" style="left:1744px;top:796px;width:106px;;letter-spacing:-0.065px;">This data was...</div>
<svg class="ic" style="left:377px;top:824px;width:15px;height:15px" viewBox="0 0 15 15"><path d="M12.4 1.2 V6.5 A5.9 5.9 0 0 1 6.5 12.4 A5.5 5.5 0 0 1 1.1 7 A5.8 5.8 0 0 1 7 1.2 Z" fill="none" stroke="#23804a" stroke-width="1.3"/><path d="M3.6 10.4 L7.6 5.6" stroke="#7fb896" stroke-width="1.1"/><rect x="8.6" y="9.6" width="5.2" height="4.6" fill="#fff"/><path d="M9.2 10.2 V13.6 H13.2 V10.2" fill="none" stroke="#666" stroke-width="1.1"/><rect x="8" y="9.2" width="6.6" height="1.2" fill="#666"/></svg>
<div class="cell" style="left:394px;top:820px;width:198px;;">HCFC-22</div>
<div class="cell" style="left:601px;top:820px;width:214px;;">Elementary Flows/emission/air</div>
<div class="cell" style="left:817px;top:820px;width:108px;text-align:right;;">1.00000E-8</div>
<svg class="ic" style="left:934px;top:827px;width:14px;height:9px" viewBox="0 0 14 9"><rect x="0.6" y="0.6" width="12.8" height="7" rx="1" fill="none" stroke="#2a6079" stroke-width="1.2"/><path d="M3.2 1 V3.4 M6 1 V3.4 M8.8 1 V3.4 M11.2 1 V3.4" stroke="#2a6079" stroke-width="1.1"/></svg>
<div class="cell" style="left:957px;top:820px;width:80px;">kg</div>
<div class="cell" style="left:1169px;top:820px;width:106px;;">none</div>
<div class="cell" style="left:1744px;top:820px;width:106px;;letter-spacing:-0.065px;">This data was...</div>
<svg class="ic" style="left:377px;top:848px;width:15px;height:15px" viewBox="0 0 15 15"><path d="M12.4 1.2 V6.5 A5.9 5.9 0 0 1 6.5 12.4 A5.5 5.5 0 0 1 1.1 7 A5.8 5.8 0 0 1 7 1.2 Z" fill="none" stroke="#23804a" stroke-width="1.3"/><path d="M3.6 10.4 L7.6 5.6" stroke="#7fb896" stroke-width="1.1"/><rect x="8.6" y="9.6" width="5.2" height="4.6" fill="#fff"/><path d="M9.2 10.2 V13.6 H13.2 V10.2" fill="none" stroke="#666" stroke-width="1.1"/><rect x="8" y="9.2" width="6.6" height="1.2" fill="#666"/></svg>
<div class="cell" style="left:394px;top:844px;width:198px;;">Hydrochloric acid</div>
<div class="cell" style="left:601px;top:844px;width:214px;;">Elementary Flows/emission/air</div>
<div class="cell" style="left:817px;top:844px;width:108px;text-align:right;;">1.00000E-8</div>
<svg class="ic" style="left:934px;top:851px;width:14px;height:9px" viewBox="0 0 14 9"><rect x="0.6" y="0.6" width="12.8" height="7" rx="1" fill="none" stroke="#2a6079" stroke-width="1.2"/><path d="M3.2 1 V3.4 M6 1 V3.4 M8.8 1 V3.4 M11.2 1 V3.4" stroke="#2a6079" stroke-width="1.1"/></svg>
<div class="cell" style="left:957px;top:844px;width:80px;">kg</div>
<div class="cell" style="left:1169px;top:844px;width:106px;;">none</div>
<div class="cell" style="left:1744px;top:844px;width:106px;;letter-spacing:-0.065px;">This data was...</div>
<div style="left:1861px;top:528px;width:20px;height:347px;background:#f0f0f0"></div>
<div style="left:1862px;top:550px;width:18px;height:141px;background:#cdcdcd"></div>
<svg class="ic" style="left:1866px;top:535px;width:11px;height:9px" viewBox="0 0 11 9"><path d="M1.3 8.2 L5.5 3 L9.7 8.2" fill="none" stroke="#505050" stroke-width="2" stroke-linejoin="round"/></svg>
<svg class="ic" style="left:1866px;top:859px;width:11px;height:9px" viewBox="0 0 11 9"><path d="M1.3 0.8 L5.5 6 L9.7 0.8" fill="none" stroke="#505050" stroke-width="2" stroke-linejoin="round"/></svg>
<div style="left:382px;top:873px;width:8px;height:1px;background:#5a9e76"></div>
<div style="left:339px;top:901px;width:1549px;height:1px;background:#a0a0a0"></div>
<div style="left:339px;top:902px;width:1549px;height:24px;background:#f0f0f0"></div>
<div class="btab" style="left:340px;width:141px;padding-left:4px;">General information</div>
<div class="btab" style="left:480px;width:106px;padding-left:4px;">Inputs/Outputs</div>
<div class="btab" style="left:585px;width:112px;padding-left:4px;">Documentation</div>
<div class="btab" style="left:696px;width:82px;padding-left:4px;letter-spacing:-0.600px;">Parameters</div>
<div class="btab" style="left:777px;width:77px;padding-left:4px;">Allocation</div>
<div class="btab" style="left:853px;width:102px;padding-left:4px;letter-spacing:-0.340px;">Social aspects</div>
<div class="btab" style="left:954px;width:105px;padding-left:4px;">Direct impacts</div>
<div style="left:481px;top:901px;width:104px;height:1px;background:#f0f0f0"></div>
<div style="left:482px;top:923px;width:103px;height:3px;background:linear-gradient(#7a7a7a,#6a6a6a 60%,#b0b0b0);border-radius:0 0 2px 2px"></div>
<div style="left:338px;top:926px;width:1550px;height:1px;background:#dcdcdc"></div>
</body></html>
